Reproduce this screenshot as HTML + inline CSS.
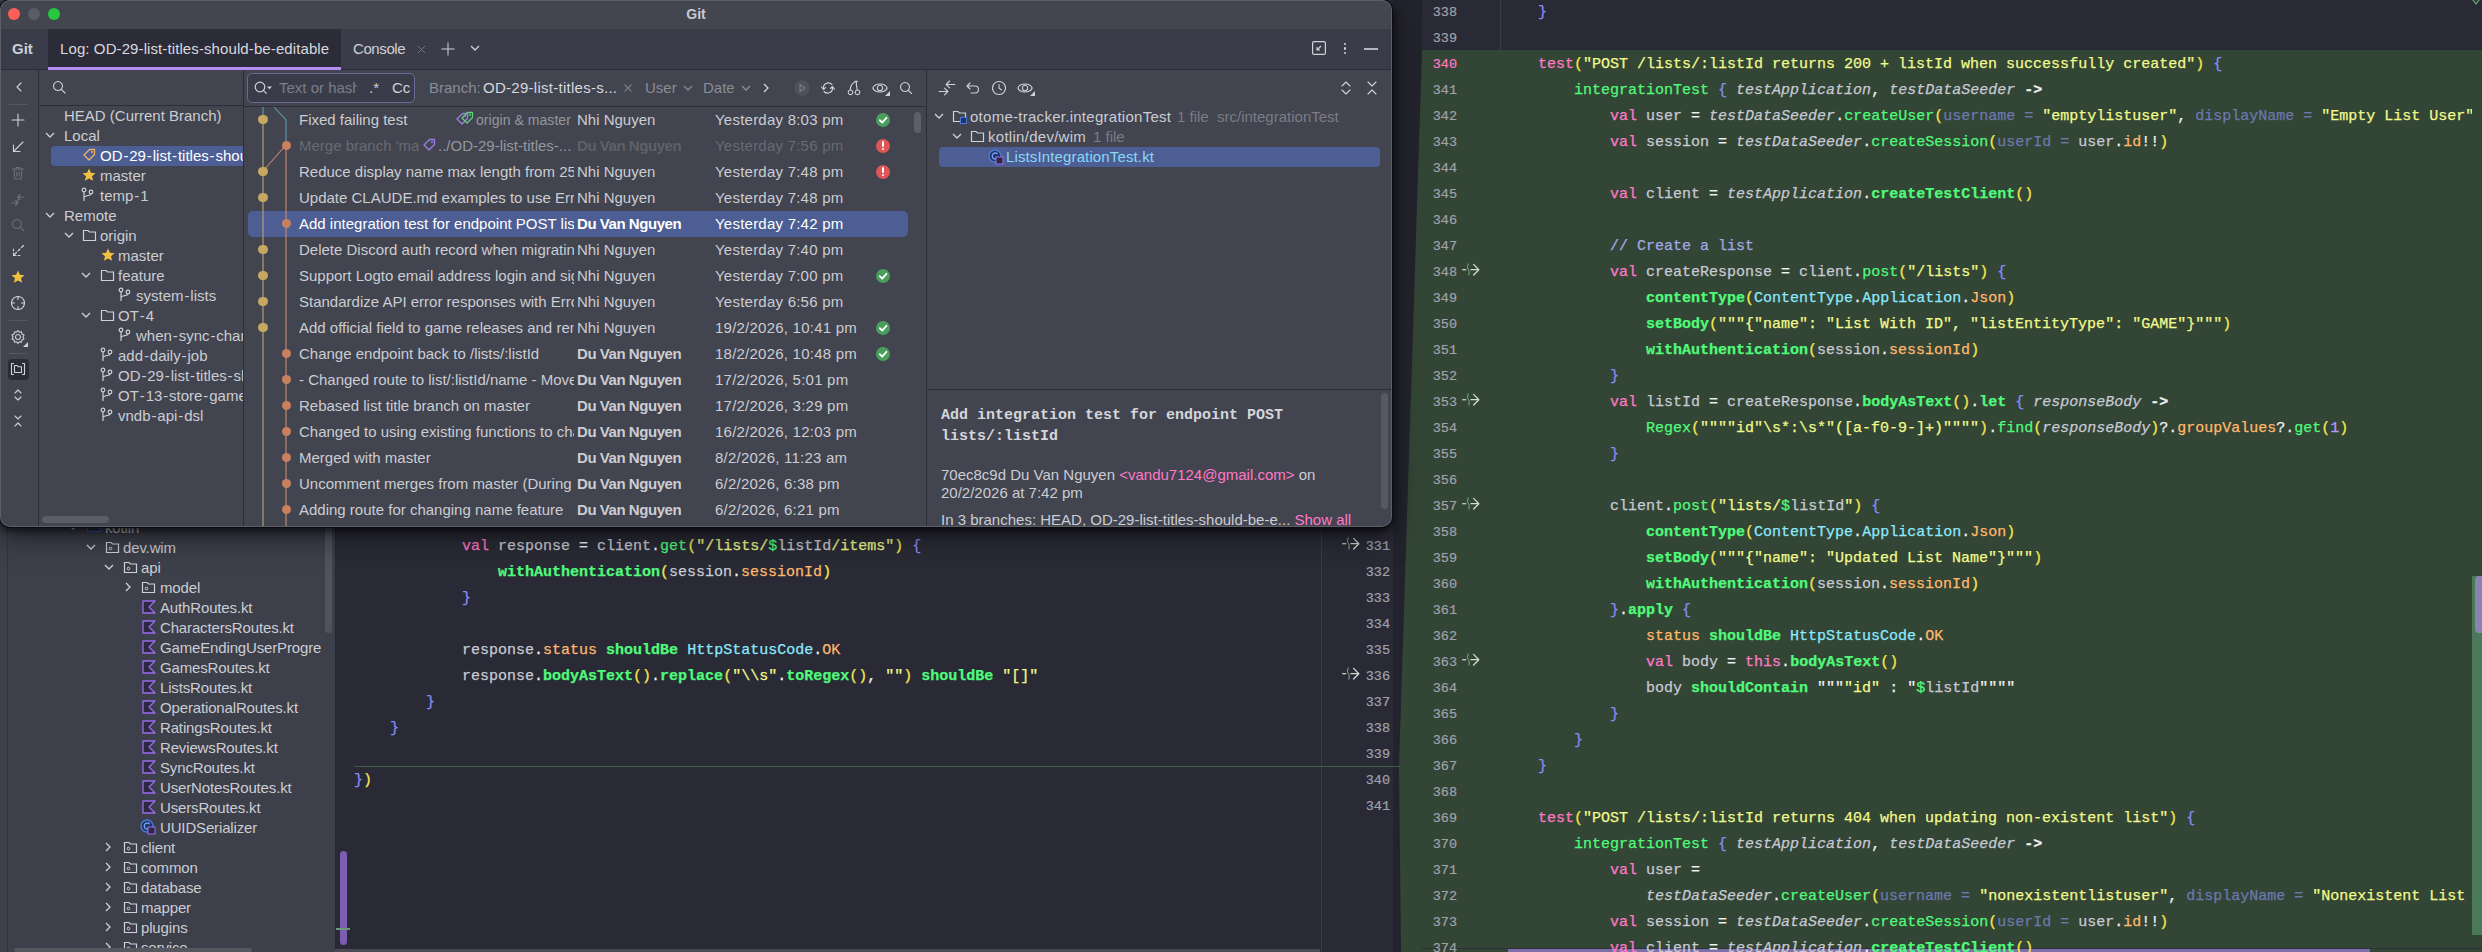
<!DOCTYPE html>
<html><head><meta charset="utf-8"><style>
html,body{margin:0;padding:0;width:2482px;height:952px;overflow:hidden;background:#292a35}
body{position:relative;font-family:"Liberation Sans",sans-serif}
</style></head><body>
<div style="position:absolute;left:0px;top:0px;width:2482px;height:952px;background:#292a35;"></div><div style="position:absolute;left:0px;top:0px;width:335px;height:952px;background:#3d3f4a;"></div><div style="position:absolute;left:7px;top:0px;width:1px;height:952px;background:#34363f;"></div><svg style="position:absolute;left:68px;top:524px;overflow:visible" width="10" height="6" viewBox="0 0 10 6" ><path d="M1 1 L5 5 L9 1" fill="none" stroke="#cfd1d8" stroke-width="1.3"/></svg><div style="position:absolute;left:87px;top:520px;width:14px;height:12px;background:#2a3450;border:1.5px solid #3a5fb0;box-sizing:border-box"></div><div style="position:absolute;left:105px;top:518px;font:400 15px/20px 'Liberation Sans',sans-serif;color:#cbcdd3;white-space:pre;letter-spacing:-0.15px">kotlin</div><svg style="position:absolute;left:86px;top:544px;overflow:visible" width="10" height="6" viewBox="0 0 10 6" ><path d="M1 1 L5 5 L9 1" fill="none" stroke="#cfd1d8" stroke-width="1.3"/></svg><svg style="position:absolute;left:105px;top:540px;overflow:visible" width="16" height="14" viewBox="0 0 16 14" ><path d="M1.5 2.5 h4.5 l1.5 1.5 h6 v8.5 h-12 z" fill="none" stroke="#cfd1d8" stroke-width="1.2"/><circle cx="5.5" cy="8.5" r="1.3" fill="none" stroke="#cfd1d8" stroke-width="1"/></svg><div style="position:absolute;left:123px;top:538px;font:400 15px/20px 'Liberation Sans',sans-serif;color:#cbcdd3;white-space:pre;letter-spacing:-0.15px">dev.wim</div><svg style="position:absolute;left:104px;top:564px;overflow:visible" width="10" height="6" viewBox="0 0 10 6" ><path d="M1 1 L5 5 L9 1" fill="none" stroke="#cfd1d8" stroke-width="1.3"/></svg><svg style="position:absolute;left:123px;top:560px;overflow:visible" width="16" height="14" viewBox="0 0 16 14" ><path d="M1.5 2.5 h4.5 l1.5 1.5 h6 v8.5 h-12 z" fill="none" stroke="#cfd1d8" stroke-width="1.2"/><circle cx="5.5" cy="8.5" r="1.3" fill="none" stroke="#cfd1d8" stroke-width="1"/></svg><div style="position:absolute;left:141px;top:558px;font:400 15px/20px 'Liberation Sans',sans-serif;color:#cbcdd3;white-space:pre;letter-spacing:-0.15px">api</div><svg style="position:absolute;left:125px;top:582px;overflow:visible" width="6" height="10" viewBox="0 0 6 10" ><path d="M1 1 L5 5 L1 9" fill="none" stroke="#cfd1d8" stroke-width="1.3"/></svg><svg style="position:absolute;left:141px;top:580px;overflow:visible" width="16" height="14" viewBox="0 0 16 14" ><path d="M1.5 2.5 h4.5 l1.5 1.5 h6 v8.5 h-12 z" fill="none" stroke="#cfd1d8" stroke-width="1.2"/><circle cx="5.5" cy="8.5" r="1.3" fill="none" stroke="#cfd1d8" stroke-width="1"/></svg><div style="position:absolute;left:160px;top:578px;font:400 15px/20px 'Liberation Sans',sans-serif;color:#cbcdd3;white-space:pre;letter-spacing:-0.15px">model</div><svg style="position:absolute;left:142px;top:600px;overflow:visible" width="14" height="14" viewBox="0 0 14 14" ><path d="M1 1 H13 L7 7 L13 13 H1 Z" fill="#2b2840" stroke="#9a6cf0" stroke-width="1.3" stroke-linejoin="round"/></svg><div style="position:absolute;left:160px;top:598px;font:400 15px/20px 'Liberation Sans',sans-serif;color:#cbcdd3;white-space:pre;letter-spacing:-0.15px">AuthRoutes.kt</div><svg style="position:absolute;left:142px;top:620px;overflow:visible" width="14" height="14" viewBox="0 0 14 14" ><path d="M1 1 H13 L7 7 L13 13 H1 Z" fill="#2b2840" stroke="#9a6cf0" stroke-width="1.3" stroke-linejoin="round"/></svg><div style="position:absolute;left:160px;top:618px;font:400 15px/20px 'Liberation Sans',sans-serif;color:#cbcdd3;white-space:pre;letter-spacing:-0.15px">CharactersRoutes.kt</div><svg style="position:absolute;left:142px;top:640px;overflow:visible" width="14" height="14" viewBox="0 0 14 14" ><path d="M1 1 H13 L7 7 L13 13 H1 Z" fill="#2b2840" stroke="#9a6cf0" stroke-width="1.3" stroke-linejoin="round"/></svg><div style="position:absolute;left:160px;top:638px;font:400 15px/20px 'Liberation Sans',sans-serif;color:#cbcdd3;white-space:pre;letter-spacing:-0.15px">GameEndingUserProgre</div><svg style="position:absolute;left:142px;top:660px;overflow:visible" width="14" height="14" viewBox="0 0 14 14" ><path d="M1 1 H13 L7 7 L13 13 H1 Z" fill="#2b2840" stroke="#9a6cf0" stroke-width="1.3" stroke-linejoin="round"/></svg><div style="position:absolute;left:160px;top:658px;font:400 15px/20px 'Liberation Sans',sans-serif;color:#cbcdd3;white-space:pre;letter-spacing:-0.15px">GamesRoutes.kt</div><svg style="position:absolute;left:142px;top:680px;overflow:visible" width="14" height="14" viewBox="0 0 14 14" ><path d="M1 1 H13 L7 7 L13 13 H1 Z" fill="#2b2840" stroke="#9a6cf0" stroke-width="1.3" stroke-linejoin="round"/></svg><div style="position:absolute;left:160px;top:678px;font:400 15px/20px 'Liberation Sans',sans-serif;color:#cbcdd3;white-space:pre;letter-spacing:-0.15px">ListsRoutes.kt</div><svg style="position:absolute;left:142px;top:700px;overflow:visible" width="14" height="14" viewBox="0 0 14 14" ><path d="M1 1 H13 L7 7 L13 13 H1 Z" fill="#2b2840" stroke="#9a6cf0" stroke-width="1.3" stroke-linejoin="round"/></svg><div style="position:absolute;left:160px;top:698px;font:400 15px/20px 'Liberation Sans',sans-serif;color:#cbcdd3;white-space:pre;letter-spacing:-0.15px">OperationalRoutes.kt</div><svg style="position:absolute;left:142px;top:720px;overflow:visible" width="14" height="14" viewBox="0 0 14 14" ><path d="M1 1 H13 L7 7 L13 13 H1 Z" fill="#2b2840" stroke="#9a6cf0" stroke-width="1.3" stroke-linejoin="round"/></svg><div style="position:absolute;left:160px;top:718px;font:400 15px/20px 'Liberation Sans',sans-serif;color:#cbcdd3;white-space:pre;letter-spacing:-0.15px">RatingsRoutes.kt</div><svg style="position:absolute;left:142px;top:740px;overflow:visible" width="14" height="14" viewBox="0 0 14 14" ><path d="M1 1 H13 L7 7 L13 13 H1 Z" fill="#2b2840" stroke="#9a6cf0" stroke-width="1.3" stroke-linejoin="round"/></svg><div style="position:absolute;left:160px;top:738px;font:400 15px/20px 'Liberation Sans',sans-serif;color:#cbcdd3;white-space:pre;letter-spacing:-0.15px">ReviewsRoutes.kt</div><svg style="position:absolute;left:142px;top:760px;overflow:visible" width="14" height="14" viewBox="0 0 14 14" ><path d="M1 1 H13 L7 7 L13 13 H1 Z" fill="#2b2840" stroke="#9a6cf0" stroke-width="1.3" stroke-linejoin="round"/></svg><div style="position:absolute;left:160px;top:758px;font:400 15px/20px 'Liberation Sans',sans-serif;color:#cbcdd3;white-space:pre;letter-spacing:-0.15px">SyncRoutes.kt</div><svg style="position:absolute;left:142px;top:780px;overflow:visible" width="14" height="14" viewBox="0 0 14 14" ><path d="M1 1 H13 L7 7 L13 13 H1 Z" fill="#2b2840" stroke="#9a6cf0" stroke-width="1.3" stroke-linejoin="round"/></svg><div style="position:absolute;left:160px;top:778px;font:400 15px/20px 'Liberation Sans',sans-serif;color:#cbcdd3;white-space:pre;letter-spacing:-0.15px">UserNotesRoutes.kt</div><svg style="position:absolute;left:142px;top:800px;overflow:visible" width="14" height="14" viewBox="0 0 14 14" ><path d="M1 1 H13 L7 7 L13 13 H1 Z" fill="#2b2840" stroke="#9a6cf0" stroke-width="1.3" stroke-linejoin="round"/></svg><div style="position:absolute;left:160px;top:798px;font:400 15px/20px 'Liberation Sans',sans-serif;color:#cbcdd3;white-space:pre;letter-spacing:-0.15px">UsersRoutes.kt</div><svg style="position:absolute;left:140px;top:819px;overflow:visible" width="16" height="16" viewBox="0 0 16 16" ><circle cx="7" cy="7" r="6" fill="#23345a" stroke="#4a7ae0" stroke-width="1.4"/><path d="M9.5 5 A3 3 0 1 0 9.5 9" fill="none" stroke="#6fa0ff" stroke-width="1.4"/><rect x="8" y="8" width="7" height="7" fill="#2b2840" stroke="#a070f0" stroke-width="1"/></svg><div style="position:absolute;left:160px;top:818px;font:400 15px/20px 'Liberation Sans',sans-serif;color:#cbcdd3;white-space:pre;letter-spacing:-0.15px">UUIDSerializer</div><svg style="position:absolute;left:105px;top:842px;overflow:visible" width="6" height="10" viewBox="0 0 6 10" ><path d="M1 1 L5 5 L1 9" fill="none" stroke="#cfd1d8" stroke-width="1.3"/></svg><svg style="position:absolute;left:123px;top:840px;overflow:visible" width="16" height="14" viewBox="0 0 16 14" ><path d="M1.5 2.5 h4.5 l1.5 1.5 h6 v8.5 h-12 z" fill="none" stroke="#cfd1d8" stroke-width="1.2"/><circle cx="5.5" cy="8.5" r="1.3" fill="none" stroke="#cfd1d8" stroke-width="1"/></svg><div style="position:absolute;left:141px;top:838px;font:400 15px/20px 'Liberation Sans',sans-serif;color:#cbcdd3;white-space:pre;letter-spacing:-0.15px">client</div><svg style="position:absolute;left:105px;top:862px;overflow:visible" width="6" height="10" viewBox="0 0 6 10" ><path d="M1 1 L5 5 L1 9" fill="none" stroke="#cfd1d8" stroke-width="1.3"/></svg><svg style="position:absolute;left:123px;top:860px;overflow:visible" width="16" height="14" viewBox="0 0 16 14" ><path d="M1.5 2.5 h4.5 l1.5 1.5 h6 v8.5 h-12 z" fill="none" stroke="#cfd1d8" stroke-width="1.2"/><circle cx="5.5" cy="8.5" r="1.3" fill="none" stroke="#cfd1d8" stroke-width="1"/></svg><div style="position:absolute;left:141px;top:858px;font:400 15px/20px 'Liberation Sans',sans-serif;color:#cbcdd3;white-space:pre;letter-spacing:-0.15px">common</div><svg style="position:absolute;left:105px;top:882px;overflow:visible" width="6" height="10" viewBox="0 0 6 10" ><path d="M1 1 L5 5 L1 9" fill="none" stroke="#cfd1d8" stroke-width="1.3"/></svg><svg style="position:absolute;left:123px;top:880px;overflow:visible" width="16" height="14" viewBox="0 0 16 14" ><path d="M1.5 2.5 h4.5 l1.5 1.5 h6 v8.5 h-12 z" fill="none" stroke="#cfd1d8" stroke-width="1.2"/><circle cx="5.5" cy="8.5" r="1.3" fill="none" stroke="#cfd1d8" stroke-width="1"/></svg><div style="position:absolute;left:141px;top:878px;font:400 15px/20px 'Liberation Sans',sans-serif;color:#cbcdd3;white-space:pre;letter-spacing:-0.15px">database</div><svg style="position:absolute;left:105px;top:902px;overflow:visible" width="6" height="10" viewBox="0 0 6 10" ><path d="M1 1 L5 5 L1 9" fill="none" stroke="#cfd1d8" stroke-width="1.3"/></svg><svg style="position:absolute;left:123px;top:900px;overflow:visible" width="16" height="14" viewBox="0 0 16 14" ><path d="M1.5 2.5 h4.5 l1.5 1.5 h6 v8.5 h-12 z" fill="none" stroke="#cfd1d8" stroke-width="1.2"/><circle cx="5.5" cy="8.5" r="1.3" fill="none" stroke="#cfd1d8" stroke-width="1"/></svg><div style="position:absolute;left:141px;top:898px;font:400 15px/20px 'Liberation Sans',sans-serif;color:#cbcdd3;white-space:pre;letter-spacing:-0.15px">mapper</div><svg style="position:absolute;left:105px;top:922px;overflow:visible" width="6" height="10" viewBox="0 0 6 10" ><path d="M1 1 L5 5 L1 9" fill="none" stroke="#cfd1d8" stroke-width="1.3"/></svg><svg style="position:absolute;left:123px;top:920px;overflow:visible" width="16" height="14" viewBox="0 0 16 14" ><path d="M1.5 2.5 h4.5 l1.5 1.5 h6 v8.5 h-12 z" fill="none" stroke="#cfd1d8" stroke-width="1.2"/><circle cx="5.5" cy="8.5" r="1.3" fill="none" stroke="#cfd1d8" stroke-width="1"/></svg><div style="position:absolute;left:141px;top:918px;font:400 15px/20px 'Liberation Sans',sans-serif;color:#cbcdd3;white-space:pre;letter-spacing:-0.15px">plugins</div><svg style="position:absolute;left:105px;top:942px;overflow:visible" width="6" height="10" viewBox="0 0 6 10" ><path d="M1 1 L5 5 L1 9" fill="none" stroke="#cfd1d8" stroke-width="1.3"/></svg><svg style="position:absolute;left:123px;top:940px;overflow:visible" width="16" height="14" viewBox="0 0 16 14" ><path d="M1.5 2.5 h4.5 l1.5 1.5 h6 v8.5 h-12 z" fill="none" stroke="#cfd1d8" stroke-width="1.2"/><circle cx="5.5" cy="8.5" r="1.3" fill="none" stroke="#cfd1d8" stroke-width="1"/></svg><div style="position:absolute;left:141px;top:938px;font:400 15px/20px 'Liberation Sans',sans-serif;color:#cbcdd3;white-space:pre;letter-spacing:-0.15px">service</div><div style="position:absolute;left:325px;top:527px;width:7px;height:106px;background:#50525c;border-radius:0 0 4px 4px"></div><div style="position:absolute;left:14px;top:948px;width:238px;height:4px;background:#55575f;border-radius:2px"></div><div style="position:absolute;left:335px;top:0px;width:1065px;height:952px;background:#292a35;"></div><div style="position:absolute;left:335px;top:0px;width:1px;height:952px;background:#25262f;"></div><div style="position:absolute;left:340px;top:851px;width:7px;height:94px;background:#7a5eb0;border-radius:4px"></div><div style="position:absolute;left:336px;top:928px;width:14px;height:2px;background:#6a9a78;"></div><div style="position:absolute;left:1321px;top:0px;width:1px;height:952px;background:#3a3b46;"></div><div style="position:absolute;left:335px;top:949px;width:985px;height:3px;background:#4a4b55;"></div><div style="position:absolute;left:1393px;top:0px;width:29px;height:952px;background:#22232c;"></div><svg style="position:absolute;left:1390px;top:0px;overflow:visible" width="1092" height="952" viewBox="0 0 1092 952" ><polygon points="9,766 32,50 1092,50 1092,952 11,952" fill="#334535"/></svg><div style="position:absolute;left:354px;top:766px;width:1046px;height:1px;background:#3f5f45;"></div><div style="position:absolute;left:1422px;top:0px;width:1060px;height:50px;background:#292a35;"></div><div style="position:absolute;left:1500px;top:0px;width:1px;height:50px;background:#3a3b46;"></div><div style="position:absolute;left:2472px;top:576px;width:10px;height:359px;background:#4a7858;"></div><svg style="position:absolute;left:2468px;top:-6px;overflow:visible" width="16" height="12" viewBox="0 0 16 12" ><path d="M2 2 L8 10 L14 2" fill="#24402c" stroke="#6f9f80" stroke-width="1.2"/></svg><div style="position:absolute;left:2475px;top:576px;width:9px;height:57px;background:#8785b0;border-radius:4px"></div><div style="position:absolute;left:1422px;top:948px;width:1060px;height:1px;background:#2e2f38;"></div><div style="position:absolute;left:1508px;top:949px;width:862px;height:3px;background:#7d70a8;"></div><div style="position:absolute;left:1502px;top:0;width:970px;height:952px;overflow:hidden"><div style="position:absolute;left:0px;top:0px;font:15px/26px 'Liberation Mono',monospace;white-space:pre;-webkit-text-stroke:0.25px"><span style="color:#c8cad4">    </span><span style="color:#8a8cf7">}</span></div><div style="position:absolute;left:0px;top:26px;font:15px/26px 'Liberation Mono',monospace;white-space:pre;-webkit-text-stroke:0.25px"></div><div style="position:absolute;left:0px;top:52px;font:15px/26px 'Liberation Mono',monospace;white-space:pre;-webkit-text-stroke:0.25px"><span style="color:#c8cad4">    </span><span style="color:#ff79c6">test</span><span style="color:#f4e84e">(</span><span style="color:#f1fa8c">"POST /lists/:listId returns 200 + listId when successfully created"</span><span style="color:#f4e84e">)</span><span style="color:#c8cad4"> </span><span style="color:#8a8cf7">{</span></div><div style="position:absolute;left:0px;top:78px;font:15px/26px 'Liberation Mono',monospace;white-space:pre;-webkit-text-stroke:0.25px"><span style="color:#c8cad4">        </span><span style="color:#50fa7b">integrationTest</span><span style="color:#c8cad4"> </span><span style="color:#8a8cf7">{</span><span style="color:#c8cad4"> </span><span style="color:#c8cad4;font-style:italic">testApplication</span><span style="color:#f2f2f2">, </span><span style="color:#c8cad4;font-style:italic">testDataSeeder</span><span style="color:#c8cad4"> </span><span style="color:#f2f2f2;font-weight:700">-&gt;</span></div><div style="position:absolute;left:0px;top:104px;font:15px/26px 'Liberation Mono',monospace;white-space:pre;-webkit-text-stroke:0.25px"><span style="color:#c8cad4">            </span><span style="color:#ff79c6">val</span><span style="color:#c8cad4"> user </span><span style="color:#f2f2f2">=</span><span style="color:#c8cad4"> </span><span style="color:#c8cad4;font-style:italic">testDataSeeder</span><span style="color:#f2f2f2">.</span><span style="color:#50fa7b">createUser</span><span style="color:#f4e84e">(</span><span style="color:#6c78ad">username = </span><span style="color:#f1fa8c">"emptylistuser"</span><span style="color:#f2f2f2">, </span><span style="color:#6c78ad">displayName = </span><span style="color:#f1fa8c">"Empty List User"</span><span style="color:#f4e84e">)</span></div><div style="position:absolute;left:0px;top:130px;font:15px/26px 'Liberation Mono',monospace;white-space:pre;-webkit-text-stroke:0.25px"><span style="color:#c8cad4">            </span><span style="color:#ff79c6">val</span><span style="color:#c8cad4"> session </span><span style="color:#f2f2f2">=</span><span style="color:#c8cad4"> </span><span style="color:#c8cad4;font-style:italic">testDataSeeder</span><span style="color:#f2f2f2">.</span><span style="color:#50fa7b">createSession</span><span style="color:#f4e84e">(</span><span style="color:#6c78ad">userId = </span><span style="color:#c8cad4">user</span><span style="color:#f2f2f2">.</span><span style="color:#ffb86c">id</span><span style="color:#f2f2f2">!!</span><span style="color:#f4e84e">)</span></div><div style="position:absolute;left:0px;top:156px;font:15px/26px 'Liberation Mono',monospace;white-space:pre;-webkit-text-stroke:0.25px"></div><div style="position:absolute;left:0px;top:182px;font:15px/26px 'Liberation Mono',monospace;white-space:pre;-webkit-text-stroke:0.25px"><span style="color:#c8cad4">            </span><span style="color:#ff79c6">val</span><span style="color:#c8cad4"> client </span><span style="color:#f2f2f2">=</span><span style="color:#c8cad4"> </span><span style="color:#c8cad4;font-style:italic">testApplication</span><span style="color:#f2f2f2">.</span><span style="color:#50fa7b;font-weight:700">createTestClient</span><span style="color:#f4e84e">()</span></div><div style="position:absolute;left:0px;top:208px;font:15px/26px 'Liberation Mono',monospace;white-space:pre;-webkit-text-stroke:0.25px"></div><div style="position:absolute;left:0px;top:234px;font:15px/26px 'Liberation Mono',monospace;white-space:pre;-webkit-text-stroke:0.25px"><span style="color:#c8cad4">            </span><span style="color:#a2a9e6">// Create a list</span></div><div style="position:absolute;left:0px;top:260px;font:15px/26px 'Liberation Mono',monospace;white-space:pre;-webkit-text-stroke:0.25px"><span style="color:#c8cad4">            </span><span style="color:#ff79c6">val</span><span style="color:#c8cad4"> createResponse </span><span style="color:#f2f2f2">=</span><span style="color:#c8cad4"> client</span><span style="color:#f2f2f2">.</span><span style="color:#50fa7b">post</span><span style="color:#f4e84e">(</span><span style="color:#f1fa8c">"/lists"</span><span style="color:#f4e84e">)</span><span style="color:#c8cad4"> </span><span style="color:#8a8cf7">{</span></div><div style="position:absolute;left:0px;top:286px;font:15px/26px 'Liberation Mono',monospace;white-space:pre;-webkit-text-stroke:0.25px"><span style="color:#c8cad4">                </span><span style="color:#50fa7b;font-weight:700">contentType</span><span style="color:#f4e84e">(</span><span style="color:#8be9fd">ContentType</span><span style="color:#f2f2f2">.</span><span style="color:#8be9fd">Application</span><span style="color:#f2f2f2">.</span><span style="color:#ffb86c">Json</span><span style="color:#f4e84e">)</span></div><div style="position:absolute;left:0px;top:312px;font:15px/26px 'Liberation Mono',monospace;white-space:pre;-webkit-text-stroke:0.25px"><span style="color:#c8cad4">                </span><span style="color:#50fa7b;font-weight:700">setBody</span><span style="color:#f4e84e">(</span><span style="color:#f1fa8c">"""{"name": "List With ID", "listEntityType": "GAME"}"""</span><span style="color:#f4e84e">)</span></div><div style="position:absolute;left:0px;top:338px;font:15px/26px 'Liberation Mono',monospace;white-space:pre;-webkit-text-stroke:0.25px"><span style="color:#c8cad4">                </span><span style="color:#50fa7b;font-weight:700">withAuthentication</span><span style="color:#f4e84e">(</span><span style="color:#c8cad4">session</span><span style="color:#f2f2f2">.</span><span style="color:#ffb86c">sessionId</span><span style="color:#f4e84e">)</span></div><div style="position:absolute;left:0px;top:364px;font:15px/26px 'Liberation Mono',monospace;white-space:pre;-webkit-text-stroke:0.25px"><span style="color:#c8cad4">            </span><span style="color:#8a8cf7">}</span></div><div style="position:absolute;left:0px;top:390px;font:15px/26px 'Liberation Mono',monospace;white-space:pre;-webkit-text-stroke:0.25px"><span style="color:#c8cad4">            </span><span style="color:#ff79c6">val</span><span style="color:#c8cad4"> listId </span><span style="color:#f2f2f2">=</span><span style="color:#c8cad4"> createResponse</span><span style="color:#f2f2f2">.</span><span style="color:#50fa7b;font-weight:700">bodyAsText</span><span style="color:#f4e84e">()</span><span style="color:#f2f2f2">.</span><span style="color:#50fa7b;font-weight:700">let</span><span style="color:#c8cad4"> </span><span style="color:#8a8cf7">{</span><span style="color:#c8cad4"> </span><span style="color:#c8cad4;font-style:italic">responseBody</span><span style="color:#c8cad4"> </span><span style="color:#f2f2f2;font-weight:700">-&gt;</span></div><div style="position:absolute;left:0px;top:416px;font:15px/26px 'Liberation Mono',monospace;white-space:pre;-webkit-text-stroke:0.25px"><span style="color:#c8cad4">                </span><span style="color:#50fa7b">Regex</span><span style="color:#f4e84e">(</span><span style="color:#f1fa8c">""""id"\s*:\s*"([a-f0-9-]+)""""</span><span style="color:#f4e84e">)</span><span style="color:#f2f2f2">.</span><span style="color:#50fa7b">find</span><span style="color:#f4e84e">(</span><span style="color:#c8cad4;font-style:italic">responseBody</span><span style="color:#f4e84e">)</span><span style="color:#f2f2f2">?.</span><span style="color:#ffb86c">groupValues</span><span style="color:#f2f2f2">?.</span><span style="color:#50fa7b">get</span><span style="color:#f4e84e">(</span><span style="color:#bd93f9">1</span><span style="color:#f4e84e">)</span></div><div style="position:absolute;left:0px;top:442px;font:15px/26px 'Liberation Mono',monospace;white-space:pre;-webkit-text-stroke:0.25px"><span style="color:#c8cad4">            </span><span style="color:#8a8cf7">}</span></div><div style="position:absolute;left:0px;top:468px;font:15px/26px 'Liberation Mono',monospace;white-space:pre;-webkit-text-stroke:0.25px"></div><div style="position:absolute;left:0px;top:494px;font:15px/26px 'Liberation Mono',monospace;white-space:pre;-webkit-text-stroke:0.25px"><span style="color:#c8cad4">            </span><span style="color:#c8cad4">client</span><span style="color:#f2f2f2">.</span><span style="color:#50fa7b">post</span><span style="color:#f4e84e">(</span><span style="color:#f1fa8c">"lists/</span><span style="color:#50fa7b">$</span><span style="color:#c8cad4">listId</span><span style="color:#f1fa8c">"</span><span style="color:#f4e84e">)</span><span style="color:#c8cad4"> </span><span style="color:#8a8cf7">{</span></div><div style="position:absolute;left:0px;top:520px;font:15px/26px 'Liberation Mono',monospace;white-space:pre;-webkit-text-stroke:0.25px"><span style="color:#c8cad4">                </span><span style="color:#50fa7b;font-weight:700">contentType</span><span style="color:#f4e84e">(</span><span style="color:#8be9fd">ContentType</span><span style="color:#f2f2f2">.</span><span style="color:#8be9fd">Application</span><span style="color:#f2f2f2">.</span><span style="color:#ffb86c">Json</span><span style="color:#f4e84e">)</span></div><div style="position:absolute;left:0px;top:546px;font:15px/26px 'Liberation Mono',monospace;white-space:pre;-webkit-text-stroke:0.25px"><span style="color:#c8cad4">                </span><span style="color:#50fa7b;font-weight:700">setBody</span><span style="color:#f4e84e">(</span><span style="color:#f1fa8c">"""{"name": "Updated List Name"}"""</span><span style="color:#f4e84e">)</span></div><div style="position:absolute;left:0px;top:572px;font:15px/26px 'Liberation Mono',monospace;white-space:pre;-webkit-text-stroke:0.25px"><span style="color:#c8cad4">                </span><span style="color:#50fa7b;font-weight:700">withAuthentication</span><span style="color:#f4e84e">(</span><span style="color:#c8cad4">session</span><span style="color:#f2f2f2">.</span><span style="color:#ffb86c">sessionId</span><span style="color:#f4e84e">)</span></div><div style="position:absolute;left:0px;top:598px;font:15px/26px 'Liberation Mono',monospace;white-space:pre;-webkit-text-stroke:0.25px"><span style="color:#c8cad4">            </span><span style="color:#8a8cf7">}</span><span style="color:#f2f2f2">.</span><span style="color:#50fa7b;font-weight:700">apply</span><span style="color:#c8cad4"> </span><span style="color:#8a8cf7">{</span></div><div style="position:absolute;left:0px;top:624px;font:15px/26px 'Liberation Mono',monospace;white-space:pre;-webkit-text-stroke:0.25px"><span style="color:#c8cad4">                </span><span style="color:#ffb86c">status</span><span style="color:#c8cad4"> </span><span style="color:#50fa7b;font-weight:700">shouldBe</span><span style="color:#c8cad4"> </span><span style="color:#8be9fd">HttpStatusCode</span><span style="color:#f2f2f2">.</span><span style="color:#ffb86c">OK</span></div><div style="position:absolute;left:0px;top:650px;font:15px/26px 'Liberation Mono',monospace;white-space:pre;-webkit-text-stroke:0.25px"><span style="color:#c8cad4">                </span><span style="color:#ff79c6">val</span><span style="color:#c8cad4"> body </span><span style="color:#f2f2f2">=</span><span style="color:#c8cad4"> </span><span style="color:#ff79c6">this</span><span style="color:#f2f2f2">.</span><span style="color:#50fa7b;font-weight:700">bodyAsText</span><span style="color:#f4e84e">()</span></div><div style="position:absolute;left:0px;top:676px;font:15px/26px 'Liberation Mono',monospace;white-space:pre;-webkit-text-stroke:0.25px"><span style="color:#c8cad4">                </span><span style="color:#c8cad4">body </span><span style="color:#50fa7b;font-weight:700">shouldContain</span><span style="color:#c8cad4"> </span><span style="color:#f2f2f2">"""</span><span style="color:#f1fa8c">"id"</span><span style="color:#f2f2f2"> : "</span><span style="color:#50fa7b">$</span><span style="color:#c8cad4">listId</span><span style="color:#f2f2f2">""""</span></div><div style="position:absolute;left:0px;top:702px;font:15px/26px 'Liberation Mono',monospace;white-space:pre;-webkit-text-stroke:0.25px"><span style="color:#c8cad4">            </span><span style="color:#8a8cf7">}</span></div><div style="position:absolute;left:0px;top:728px;font:15px/26px 'Liberation Mono',monospace;white-space:pre;-webkit-text-stroke:0.25px"><span style="color:#c8cad4">        </span><span style="color:#8a8cf7">}</span></div><div style="position:absolute;left:0px;top:754px;font:15px/26px 'Liberation Mono',monospace;white-space:pre;-webkit-text-stroke:0.25px"><span style="color:#c8cad4">    </span><span style="color:#8a8cf7">}</span></div><div style="position:absolute;left:0px;top:780px;font:15px/26px 'Liberation Mono',monospace;white-space:pre;-webkit-text-stroke:0.25px"></div><div style="position:absolute;left:0px;top:806px;font:15px/26px 'Liberation Mono',monospace;white-space:pre;-webkit-text-stroke:0.25px"><span style="color:#c8cad4">    </span><span style="color:#ff79c6">test</span><span style="color:#f4e84e">(</span><span style="color:#f1fa8c">"POST /lists/:listId returns 404 when updating non-existent list"</span><span style="color:#f4e84e">)</span><span style="color:#c8cad4"> </span><span style="color:#8a8cf7">{</span></div><div style="position:absolute;left:0px;top:832px;font:15px/26px 'Liberation Mono',monospace;white-space:pre;-webkit-text-stroke:0.25px"><span style="color:#c8cad4">        </span><span style="color:#50fa7b">integrationTest</span><span style="color:#c8cad4"> </span><span style="color:#8a8cf7">{</span><span style="color:#c8cad4"> </span><span style="color:#c8cad4;font-style:italic">testApplication</span><span style="color:#f2f2f2">, </span><span style="color:#c8cad4;font-style:italic">testDataSeeder</span><span style="color:#c8cad4"> </span><span style="color:#f2f2f2;font-weight:700">-&gt;</span></div><div style="position:absolute;left:0px;top:858px;font:15px/26px 'Liberation Mono',monospace;white-space:pre;-webkit-text-stroke:0.25px"><span style="color:#c8cad4">            </span><span style="color:#ff79c6">val</span><span style="color:#c8cad4"> user </span><span style="color:#f2f2f2">=</span></div><div style="position:absolute;left:0px;top:884px;font:15px/26px 'Liberation Mono',monospace;white-space:pre;-webkit-text-stroke:0.25px"><span style="color:#c8cad4">                </span><span style="color:#c8cad4;font-style:italic">testDataSeeder</span><span style="color:#f2f2f2">.</span><span style="color:#50fa7b">createUser</span><span style="color:#f4e84e">(</span><span style="color:#6c78ad">username = </span><span style="color:#f1fa8c">"nonexistentlistuser"</span><span style="color:#f2f2f2">, </span><span style="color:#6c78ad">displayName = </span><span style="color:#f1fa8c">"Nonexistent List User"</span><span style="color:#f4e84e">)</span></div><div style="position:absolute;left:0px;top:910px;font:15px/26px 'Liberation Mono',monospace;white-space:pre;-webkit-text-stroke:0.25px"><span style="color:#c8cad4">            </span><span style="color:#ff79c6">val</span><span style="color:#c8cad4"> session </span><span style="color:#f2f2f2">=</span><span style="color:#c8cad4"> </span><span style="color:#c8cad4;font-style:italic">testDataSeeder</span><span style="color:#f2f2f2">.</span><span style="color:#50fa7b">createSession</span><span style="color:#f4e84e">(</span><span style="color:#6c78ad">userId = </span><span style="color:#c8cad4">user</span><span style="color:#f2f2f2">.</span><span style="color:#ffb86c">id</span><span style="color:#f2f2f2">!!</span><span style="color:#f4e84e">)</span></div><div style="position:absolute;left:0px;top:936px;font:15px/26px 'Liberation Mono',monospace;white-space:pre;-webkit-text-stroke:0.25px"><span style="color:#c8cad4">            </span><span style="color:#ff79c6">val</span><span style="color:#c8cad4"> client </span><span style="color:#f2f2f2">=</span><span style="color:#c8cad4"> </span><span style="color:#c8cad4;font-style:italic">testApplication</span><span style="color:#f2f2f2">.</span><span style="color:#50fa7b;font-weight:700">createTestClient</span><span style="color:#f4e84e">()</span></div></div><div style="position:absolute;left:1412px;top:0px;width:45px;text-align:right;font:13.5px/26px 'Liberation Mono',monospace;color:#a0a2ac;-webkit-text-stroke:0.2px">338</div><div style="position:absolute;left:1412px;top:26px;width:45px;text-align:right;font:13.5px/26px 'Liberation Mono',monospace;color:#a0a2ac;-webkit-text-stroke:0.2px">339</div><div style="position:absolute;left:1412px;top:52px;width:45px;text-align:right;font:13.5px/26px 'Liberation Mono',monospace;color:#ff79c6;-webkit-text-stroke:0.2px">340</div><div style="position:absolute;left:1412px;top:78px;width:45px;text-align:right;font:13.5px/26px 'Liberation Mono',monospace;color:#a0a2ac;-webkit-text-stroke:0.2px">341</div><div style="position:absolute;left:1412px;top:104px;width:45px;text-align:right;font:13.5px/26px 'Liberation Mono',monospace;color:#a0a2ac;-webkit-text-stroke:0.2px">342</div><div style="position:absolute;left:1412px;top:130px;width:45px;text-align:right;font:13.5px/26px 'Liberation Mono',monospace;color:#a0a2ac;-webkit-text-stroke:0.2px">343</div><div style="position:absolute;left:1412px;top:156px;width:45px;text-align:right;font:13.5px/26px 'Liberation Mono',monospace;color:#a0a2ac;-webkit-text-stroke:0.2px">344</div><div style="position:absolute;left:1412px;top:182px;width:45px;text-align:right;font:13.5px/26px 'Liberation Mono',monospace;color:#a0a2ac;-webkit-text-stroke:0.2px">345</div><div style="position:absolute;left:1412px;top:208px;width:45px;text-align:right;font:13.5px/26px 'Liberation Mono',monospace;color:#a0a2ac;-webkit-text-stroke:0.2px">346</div><div style="position:absolute;left:1412px;top:234px;width:45px;text-align:right;font:13.5px/26px 'Liberation Mono',monospace;color:#a0a2ac;-webkit-text-stroke:0.2px">347</div><div style="position:absolute;left:1412px;top:260px;width:45px;text-align:right;font:13.5px/26px 'Liberation Mono',monospace;color:#a0a2ac;-webkit-text-stroke:0.2px">348</div><div style="position:absolute;left:1412px;top:286px;width:45px;text-align:right;font:13.5px/26px 'Liberation Mono',monospace;color:#a0a2ac;-webkit-text-stroke:0.2px">349</div><div style="position:absolute;left:1412px;top:312px;width:45px;text-align:right;font:13.5px/26px 'Liberation Mono',monospace;color:#a0a2ac;-webkit-text-stroke:0.2px">350</div><div style="position:absolute;left:1412px;top:338px;width:45px;text-align:right;font:13.5px/26px 'Liberation Mono',monospace;color:#a0a2ac;-webkit-text-stroke:0.2px">351</div><div style="position:absolute;left:1412px;top:364px;width:45px;text-align:right;font:13.5px/26px 'Liberation Mono',monospace;color:#a0a2ac;-webkit-text-stroke:0.2px">352</div><div style="position:absolute;left:1412px;top:390px;width:45px;text-align:right;font:13.5px/26px 'Liberation Mono',monospace;color:#a0a2ac;-webkit-text-stroke:0.2px">353</div><div style="position:absolute;left:1412px;top:416px;width:45px;text-align:right;font:13.5px/26px 'Liberation Mono',monospace;color:#a0a2ac;-webkit-text-stroke:0.2px">354</div><div style="position:absolute;left:1412px;top:442px;width:45px;text-align:right;font:13.5px/26px 'Liberation Mono',monospace;color:#a0a2ac;-webkit-text-stroke:0.2px">355</div><div style="position:absolute;left:1412px;top:468px;width:45px;text-align:right;font:13.5px/26px 'Liberation Mono',monospace;color:#a0a2ac;-webkit-text-stroke:0.2px">356</div><div style="position:absolute;left:1412px;top:494px;width:45px;text-align:right;font:13.5px/26px 'Liberation Mono',monospace;color:#a0a2ac;-webkit-text-stroke:0.2px">357</div><div style="position:absolute;left:1412px;top:520px;width:45px;text-align:right;font:13.5px/26px 'Liberation Mono',monospace;color:#a0a2ac;-webkit-text-stroke:0.2px">358</div><div style="position:absolute;left:1412px;top:546px;width:45px;text-align:right;font:13.5px/26px 'Liberation Mono',monospace;color:#a0a2ac;-webkit-text-stroke:0.2px">359</div><div style="position:absolute;left:1412px;top:572px;width:45px;text-align:right;font:13.5px/26px 'Liberation Mono',monospace;color:#a0a2ac;-webkit-text-stroke:0.2px">360</div><div style="position:absolute;left:1412px;top:598px;width:45px;text-align:right;font:13.5px/26px 'Liberation Mono',monospace;color:#a0a2ac;-webkit-text-stroke:0.2px">361</div><div style="position:absolute;left:1412px;top:624px;width:45px;text-align:right;font:13.5px/26px 'Liberation Mono',monospace;color:#a0a2ac;-webkit-text-stroke:0.2px">362</div><div style="position:absolute;left:1412px;top:650px;width:45px;text-align:right;font:13.5px/26px 'Liberation Mono',monospace;color:#a0a2ac;-webkit-text-stroke:0.2px">363</div><div style="position:absolute;left:1412px;top:676px;width:45px;text-align:right;font:13.5px/26px 'Liberation Mono',monospace;color:#a0a2ac;-webkit-text-stroke:0.2px">364</div><div style="position:absolute;left:1412px;top:702px;width:45px;text-align:right;font:13.5px/26px 'Liberation Mono',monospace;color:#a0a2ac;-webkit-text-stroke:0.2px">365</div><div style="position:absolute;left:1412px;top:728px;width:45px;text-align:right;font:13.5px/26px 'Liberation Mono',monospace;color:#a0a2ac;-webkit-text-stroke:0.2px">366</div><div style="position:absolute;left:1412px;top:754px;width:45px;text-align:right;font:13.5px/26px 'Liberation Mono',monospace;color:#a0a2ac;-webkit-text-stroke:0.2px">367</div><div style="position:absolute;left:1412px;top:780px;width:45px;text-align:right;font:13.5px/26px 'Liberation Mono',monospace;color:#a0a2ac;-webkit-text-stroke:0.2px">368</div><div style="position:absolute;left:1412px;top:806px;width:45px;text-align:right;font:13.5px/26px 'Liberation Mono',monospace;color:#a0a2ac;-webkit-text-stroke:0.2px">369</div><div style="position:absolute;left:1412px;top:832px;width:45px;text-align:right;font:13.5px/26px 'Liberation Mono',monospace;color:#a0a2ac;-webkit-text-stroke:0.2px">370</div><div style="position:absolute;left:1412px;top:858px;width:45px;text-align:right;font:13.5px/26px 'Liberation Mono',monospace;color:#a0a2ac;-webkit-text-stroke:0.2px">371</div><div style="position:absolute;left:1412px;top:884px;width:45px;text-align:right;font:13.5px/26px 'Liberation Mono',monospace;color:#a0a2ac;-webkit-text-stroke:0.2px">372</div><div style="position:absolute;left:1412px;top:910px;width:45px;text-align:right;font:13.5px/26px 'Liberation Mono',monospace;color:#a0a2ac;-webkit-text-stroke:0.2px">373</div><div style="position:absolute;left:1412px;top:936px;width:45px;text-align:right;font:13.5px/26px 'Liberation Mono',monospace;color:#a0a2ac;-webkit-text-stroke:0.2px">374</div><svg style="position:absolute;left:1462px;top:264px;overflow:visible" width="18" height="14" viewBox="0 0 18 14" ><path d="M0.2 5.7 H4.2" stroke="#c8d0c8" stroke-width="1.3"/><path d="M6.5 -0.6 C5 2 5 3.5 6.3 5.5 C7.8 7.5 7.8 9 6.7 11.5" fill="none" stroke="#6a9a72" stroke-width="1.1"/><path d="M9 5.7 H16.5 M11.6 0.4 L16.8 5.7 L11.6 11" fill="none" stroke="#d2dad2" stroke-width="1.3" stroke-linecap="round" stroke-linejoin="round"/></svg><svg style="position:absolute;left:1462px;top:394px;overflow:visible" width="18" height="14" viewBox="0 0 18 14" ><path d="M0.2 5.7 H4.2" stroke="#c8d0c8" stroke-width="1.3"/><path d="M6.5 -0.6 C5 2 5 3.5 6.3 5.5 C7.8 7.5 7.8 9 6.7 11.5" fill="none" stroke="#6a9a72" stroke-width="1.1"/><path d="M9 5.7 H16.5 M11.6 0.4 L16.8 5.7 L11.6 11" fill="none" stroke="#d2dad2" stroke-width="1.3" stroke-linecap="round" stroke-linejoin="round"/></svg><svg style="position:absolute;left:1462px;top:498px;overflow:visible" width="18" height="14" viewBox="0 0 18 14" ><path d="M0.2 5.7 H4.2" stroke="#c8d0c8" stroke-width="1.3"/><path d="M6.5 -0.6 C5 2 5 3.5 6.3 5.5 C7.8 7.5 7.8 9 6.7 11.5" fill="none" stroke="#6a9a72" stroke-width="1.1"/><path d="M9 5.7 H16.5 M11.6 0.4 L16.8 5.7 L11.6 11" fill="none" stroke="#d2dad2" stroke-width="1.3" stroke-linecap="round" stroke-linejoin="round"/></svg><svg style="position:absolute;left:1462px;top:654px;overflow:visible" width="18" height="14" viewBox="0 0 18 14" ><path d="M0.2 5.7 H4.2" stroke="#c8d0c8" stroke-width="1.3"/><path d="M6.5 -0.6 C5 2 5 3.5 6.3 5.5 C7.8 7.5 7.8 9 6.7 11.5" fill="none" stroke="#6a9a72" stroke-width="1.1"/><path d="M9 5.7 H16.5 M11.6 0.4 L16.8 5.7 L11.6 11" fill="none" stroke="#d2dad2" stroke-width="1.3" stroke-linecap="round" stroke-linejoin="round"/></svg><div style="position:absolute;left:354px;top:0;width:966px;height:952px;overflow:hidden"><div style="position:absolute;left:0px;top:534px;font:15px/26px 'Liberation Mono',monospace;white-space:pre;-webkit-text-stroke:0.25px"><span style="color:#c8cad4">            </span><span style="color:#ff79c6">val</span><span style="color:#c8cad4"> response </span><span style="color:#f2f2f2">=</span><span style="color:#c8cad4"> client</span><span style="color:#f2f2f2">.</span><span style="color:#50fa7b">get</span><span style="color:#f4e84e">(</span><span style="color:#f1fa8c">"/lists/</span><span style="color:#50fa7b">$</span><span style="color:#c8cad4">listId</span><span style="color:#f1fa8c">/items"</span><span style="color:#f4e84e">)</span><span style="color:#c8cad4"> </span><span style="color:#8a8cf7">{</span></div><div style="position:absolute;left:0px;top:560px;font:15px/26px 'Liberation Mono',monospace;white-space:pre;-webkit-text-stroke:0.25px"><span style="color:#c8cad4">                </span><span style="color:#50fa7b;font-weight:700">withAuthentication</span><span style="color:#f4e84e">(</span><span style="color:#c8cad4">session</span><span style="color:#f2f2f2">.</span><span style="color:#ffb86c">sessionId</span><span style="color:#f4e84e">)</span></div><div style="position:absolute;left:0px;top:586px;font:15px/26px 'Liberation Mono',monospace;white-space:pre;-webkit-text-stroke:0.25px"><span style="color:#c8cad4">            </span><span style="color:#8a8cf7">}</span></div><div style="position:absolute;left:0px;top:612px;font:15px/26px 'Liberation Mono',monospace;white-space:pre;-webkit-text-stroke:0.25px"></div><div style="position:absolute;left:0px;top:638px;font:15px/26px 'Liberation Mono',monospace;white-space:pre;-webkit-text-stroke:0.25px"><span style="color:#c8cad4">            </span><span style="color:#c8cad4">response</span><span style="color:#f2f2f2">.</span><span style="color:#ffb86c">status</span><span style="color:#c8cad4"> </span><span style="color:#50fa7b;font-weight:700">shouldBe</span><span style="color:#c8cad4"> </span><span style="color:#8be9fd">HttpStatusCode</span><span style="color:#f2f2f2">.</span><span style="color:#ffb86c">OK</span></div><div style="position:absolute;left:0px;top:664px;font:15px/26px 'Liberation Mono',monospace;white-space:pre;-webkit-text-stroke:0.25px"><span style="color:#c8cad4">            </span><span style="color:#c8cad4">response</span><span style="color:#f2f2f2">.</span><span style="color:#50fa7b;font-weight:700">bodyAsText</span><span style="color:#f4e84e">()</span><span style="color:#f2f2f2">.</span><span style="color:#50fa7b;font-weight:700">replace</span><span style="color:#f4e84e">(</span><span style="color:#f1fa8c">"\\s"</span><span style="color:#f2f2f2">.</span><span style="color:#50fa7b;font-weight:700">toRegex</span><span style="color:#f4e84e">()</span><span style="color:#f2f2f2">, </span><span style="color:#f1fa8c">""</span><span style="color:#f4e84e">)</span><span style="color:#c8cad4"> </span><span style="color:#50fa7b;font-weight:700">shouldBe</span><span style="color:#c8cad4"> </span><span style="color:#f1fa8c">"[]"</span></div><div style="position:absolute;left:0px;top:690px;font:15px/26px 'Liberation Mono',monospace;white-space:pre;-webkit-text-stroke:0.25px"><span style="color:#c8cad4">        </span><span style="color:#8a8cf7">}</span></div><div style="position:absolute;left:0px;top:716px;font:15px/26px 'Liberation Mono',monospace;white-space:pre;-webkit-text-stroke:0.25px"><span style="color:#c8cad4">    </span><span style="color:#8a8cf7">}</span></div><div style="position:absolute;left:0px;top:742px;font:15px/26px 'Liberation Mono',monospace;white-space:pre;-webkit-text-stroke:0.25px"></div><div style="position:absolute;left:0px;top:768px;font:15px/26px 'Liberation Mono',monospace;white-space:pre;-webkit-text-stroke:0.25px"><span style="color:#8a8cf7">}</span><span style="color:#f4e84e">)</span></div><div style="position:absolute;left:0px;top:794px;font:15px/26px 'Liberation Mono',monospace;white-space:pre;-webkit-text-stroke:0.25px"></div></div><div style="position:absolute;left:1345px;top:534px;width:45px;text-align:right;font:13.5px/26px 'Liberation Mono',monospace;color:#a0a2ac;-webkit-text-stroke:0.2px">331</div><div style="position:absolute;left:1345px;top:560px;width:45px;text-align:right;font:13.5px/26px 'Liberation Mono',monospace;color:#a0a2ac;-webkit-text-stroke:0.2px">332</div><div style="position:absolute;left:1345px;top:586px;width:45px;text-align:right;font:13.5px/26px 'Liberation Mono',monospace;color:#a0a2ac;-webkit-text-stroke:0.2px">333</div><div style="position:absolute;left:1345px;top:612px;width:45px;text-align:right;font:13.5px/26px 'Liberation Mono',monospace;color:#a0a2ac;-webkit-text-stroke:0.2px">334</div><div style="position:absolute;left:1345px;top:638px;width:45px;text-align:right;font:13.5px/26px 'Liberation Mono',monospace;color:#a0a2ac;-webkit-text-stroke:0.2px">335</div><div style="position:absolute;left:1345px;top:664px;width:45px;text-align:right;font:13.5px/26px 'Liberation Mono',monospace;color:#a0a2ac;-webkit-text-stroke:0.2px">336</div><div style="position:absolute;left:1345px;top:690px;width:45px;text-align:right;font:13.5px/26px 'Liberation Mono',monospace;color:#a0a2ac;-webkit-text-stroke:0.2px">337</div><div style="position:absolute;left:1345px;top:716px;width:45px;text-align:right;font:13.5px/26px 'Liberation Mono',monospace;color:#a0a2ac;-webkit-text-stroke:0.2px">338</div><div style="position:absolute;left:1345px;top:742px;width:45px;text-align:right;font:13.5px/26px 'Liberation Mono',monospace;color:#a0a2ac;-webkit-text-stroke:0.2px">339</div><div style="position:absolute;left:1345px;top:768px;width:45px;text-align:right;font:13.5px/26px 'Liberation Mono',monospace;color:#a0a2ac;-webkit-text-stroke:0.2px">340</div><div style="position:absolute;left:1345px;top:794px;width:45px;text-align:right;font:13.5px/26px 'Liberation Mono',monospace;color:#a0a2ac;-webkit-text-stroke:0.2px">341</div><svg style="position:absolute;left:1342px;top:538px;overflow:visible" width="18" height="14" viewBox="0 0 18 14" ><path d="M0.2 5.7 H4.2" stroke="#c8d0c8" stroke-width="1.3"/><path d="M6.5 -0.6 C5 2 5 3.5 6.3 5.5 C7.8 7.5 7.8 9 6.7 11.5" fill="none" stroke="#6a9a72" stroke-width="1.1"/><path d="M9 5.7 H16.5 M11.6 0.4 L16.8 5.7 L11.6 11" fill="none" stroke="#d2dad2" stroke-width="1.3" stroke-linecap="round" stroke-linejoin="round"/></svg><svg style="position:absolute;left:1342px;top:668px;overflow:visible" width="18" height="14" viewBox="0 0 18 14" ><path d="M0.2 5.7 H4.2" stroke="#c8d0c8" stroke-width="1.3"/><path d="M6.5 -0.6 C5 2 5 3.5 6.3 5.5 C7.8 7.5 7.8 9 6.7 11.5" fill="none" stroke="#6a9a72" stroke-width="1.1"/><path d="M9 5.7 H16.5 M11.6 0.4 L16.8 5.7 L11.6 11" fill="none" stroke="#d2dad2" stroke-width="1.3" stroke-linecap="round" stroke-linejoin="round"/></svg><div style="position:absolute;left:0;top:0;width:1392px;height:527px;border-radius:10px;box-shadow:0 0 0 1px #0b0b10, 0 3px 8px rgba(0,0,0,0.7), 0 10px 28px rgba(0,0,0,0.5);overflow:hidden;background:#42444f"><div style="position:absolute;left:0;top:0;width:1392px;height:527px;border-radius:10px;box-shadow:inset 0 0 0 1px #5c5e68;z-index:50;pointer-events:none"></div><div style="position:absolute;left:0px;top:0px;width:1392px;height:29px;background:#43454f;"></div><div style="position:absolute;left:8px;top:8px;width:12px;height:12px;border-radius:50%;background:#fe5f57"></div><div style="position:absolute;left:28px;top:8px;width:12px;height:12px;border-radius:50%;background:#5b5d66"></div><div style="position:absolute;left:48px;top:8px;width:12px;height:12px;border-radius:50%;background:#28c840"></div><div style="position:absolute;left:0px;top:4px;font:700 14px/20px 'Liberation Sans',sans-serif;color:#c9cad0;white-space:pre;width:1392px;text-align:center">Git</div><div style="position:absolute;left:0px;top:29px;width:1392px;height:40px;background:#3a3c49;"></div><div style="position:absolute;left:0px;top:69px;width:1392px;height:1px;background:#2c2e37;"></div><div style="position:absolute;left:12px;top:39px;font:700 15px/20px 'Liberation Sans',sans-serif;color:#cfd0d6;white-space:pre;">Git</div><div style="position:absolute;left:48px;top:29px;width:293px;height:40px;background:#2b2c38;"></div><div style="position:absolute;left:48px;top:67px;width:293px;height:3px;background:#b58cf2;"></div><div style="position:absolute;left:60px;top:39px;font:400 15px/20px 'Liberation Sans',sans-serif;color:#d8d9de;white-space:pre;letter-spacing:0.1px">Log: OD-29-list-titles-should-be-editable</div><div style="position:absolute;left:353px;top:39px;font:400 15px/20px 'Liberation Sans',sans-serif;color:#d0d1d6;white-space:pre;letter-spacing:-0.4px">Console</div><svg style="position:absolute;left:417px;top:45px;overflow:visible" width="9" height="9" viewBox="0 0 9 9" ><path d="M1 1 L8 8 M8 1 L1 8" stroke="#73757f" stroke-width="1"/></svg><svg style="position:absolute;left:441px;top:42px;overflow:visible" width="14" height="14" viewBox="0 0 14 14" ><path d="M7 0.5 V13.5 M0.5 7 H13.5" stroke="#cfd1d8" stroke-width="1"/></svg><svg style="position:absolute;left:470px;top:45px;overflow:visible" width="10" height="6" viewBox="0 0 10 6" ><path d="M1 1 L5 5 L9 1" fill="none" stroke="#cfd1d8" stroke-width="1.3"/></svg><svg style="position:absolute;left:1312px;top:41px;overflow:visible" width="14" height="14" viewBox="0 0 14 14" ><rect x="0.6" y="0.6" width="12.8" height="12.8" rx="1.5" fill="none" stroke="#cfd1d8" stroke-width="1.2"/><path d="M9 5 L5 9 M5 6 V9 H8" fill="none" stroke="#cfd1d8" stroke-width="1.1"/></svg><div style="position:absolute;left:1343.8px;top:42.8px;width:2.4px;height:2.4px;border-radius:50%;background:#cfd1d8"></div><div style="position:absolute;left:1343.8px;top:47.3px;width:2.4px;height:2.4px;border-radius:50%;background:#cfd1d8"></div><div style="position:absolute;left:1343.8px;top:51.8px;width:2.4px;height:2.4px;border-radius:50%;background:#cfd1d8"></div><div style="position:absolute;left:1364px;top:48px;width:14px;height:1.5px;background:#b4b6be;"></div><div style="position:absolute;left:38px;top:70px;width:1px;height:457px;background:#2c2e37;"></div><div style="position:absolute;left:243px;top:70px;width:1px;height:457px;background:#2c2e37;"></div><div style="position:absolute;left:926px;top:70px;width:1px;height:457px;background:#2c2e37;"></div><div style="position:absolute;left:39px;top:105px;width:204px;height:1px;background:#2c2e37;"></div><div style="position:absolute;left:244px;top:106px;width:682px;height:1px;background:#2c2e37;"></div><div style="position:absolute;left:927px;top:389px;width:465px;height:1px;background:#2c2e37;"></div><svg style="position:absolute;left:11px;top:79px;overflow:visible" width="16" height="16" viewBox="0 0 16 16" ><path d="M10 4 L6 8 L10 12" fill="none" stroke="#cfd1d8" stroke-width="1.1" stroke-linecap="round" stroke-linejoin="round"/></svg><div style="position:absolute;left:9px;top:104px;width:19px;height:1px;background:#565862;"></div><svg style="position:absolute;left:10px;top:112px;overflow:visible" width="16" height="16" viewBox="0 0 16 16" ><path d="M8 2 V14 M2 8 H14" fill="none" stroke="#cfd1d8" stroke-width="1.1" stroke-linecap="round" stroke-linejoin="round"/></svg><svg style="position:absolute;left:10px;top:139px;overflow:visible" width="16" height="16" viewBox="0 0 16 16" ><path d="M13 3 L3.5 12.5 M3.5 6 V12.5 H10" fill="none" stroke="#cfd1d8" stroke-width="1.1" stroke-linecap="round" stroke-linejoin="round"/></svg><svg style="position:absolute;left:10px;top:165px;overflow:visible" width="16" height="16" viewBox="0 0 16 16" ><path d="M2.5 4 H13.5 M6 4 V2.5 H10 V4 M4 4 L4.8 14 H11.2 L12 4 M6.8 7 V11 M9.2 7 V11" fill="none" stroke="#6c6e78" stroke-width="1.1" stroke-linecap="round" stroke-linejoin="round"/></svg><svg style="position:absolute;left:10px;top:192px;overflow:visible" width="16" height="16" viewBox="0 0 16 16" ><path d="M8 5 H14 M10 2.5 L7.5 5 L10 7.5 M2 11 H8 M5.5 8.5 L8 11 L5.5 13.5 M6 11 L10 5" fill="none" stroke="#6c6e78" stroke-width="1.1" stroke-linecap="round" stroke-linejoin="round"/></svg><svg style="position:absolute;left:10px;top:217px;overflow:visible" width="16" height="16" viewBox="0 0 16 16" ><path d="M7 2.5 A4.5 4.5 0 1 1 6.99 2.5 M10.3 10.3 L14 14" fill="none" stroke="#6c6e78" stroke-width="1.1" stroke-linecap="round" stroke-linejoin="round"/></svg><svg style="position:absolute;left:10px;top:243px;overflow:visible" width="16" height="16" viewBox="0 0 16 16" ><path d="M13.5 2.5 L11.5 4.5 M10 6 L8 8 M6.5 9.5 L4 12 M3.5 6 V8 M3.5 10 V12.5 H6 M8 12.5 H10" fill="none" stroke="#cfd1d8" stroke-width="1.1" stroke-linecap="round" stroke-linejoin="round"/></svg><svg style="position:absolute;left:11px;top:270px;overflow:visible" width="14" height="14" viewBox="0 0 14 14" ><path d="M7 0.5 L8.9 4.8 L13.5 5.2 L10 8.3 L11.1 12.8 L7 10.4 L2.9 12.8 L4 8.3 L0.5 5.2 L5.1 4.8 Z" fill="#f0c040"/></svg><svg style="position:absolute;left:10px;top:295px;overflow:visible" width="16" height="16" viewBox="0 0 16 16" ><path d="M8 1.5 A6.5 6.5 0 1 1 7.99 1.5 M8 1.5 V4.5 M8 11.5 V14.5 M1.5 8 H4.5 M11.5 8 H14.5" fill="none" stroke="#cfd1d8" stroke-width="1.1" stroke-linecap="round" stroke-linejoin="round"/></svg><div style="position:absolute;left:9px;top:320px;width:19px;height:1px;background:#565862;"></div><svg style="position:absolute;left:10px;top:329px;overflow:visible" width="16" height="16" viewBox="0 0 16 16" ><path d="M8 5.5 A2.5 2.5 0 1 1 7.99 5.5 M8 1.5 L9.3 3.2 L11.5 2.8 L11.9 5 L14 6 L13 8 L14 10 L11.9 11 L11.5 13.2 L9.3 12.8 L8 14.5 L6.7 12.8 L4.5 13.2 L4.1 11 L2 10 L3 8 L2 6 L4.1 5 L4.5 2.8 L6.7 3.2 Z" fill="none" stroke="#cfd1d8" stroke-width="1.1" stroke-linecap="round" stroke-linejoin="round"/></svg><div style="position:absolute;left:9px;top:353px;width:19px;height:1px;background:#565862;"></div><svg style="position:absolute;left:23px;top:342px;overflow:visible" width="5" height="5" viewBox="0 0 5 5" ><path d="M5 0 V5 H0 Z" fill="#cfd1d8"/></svg><div style="position:absolute;left:8px;top:359px;width:21px;height:21px;background:#2b2c36;border-radius:4px"></div><svg style="position:absolute;left:10px;top:361px;overflow:visible" width="16" height="16" viewBox="0 0 16 16" ><path d="M3.5 2.5 H1.5 V13.5 H3.5 M12.5 2.5 H14.5 V13.5 H12.5 M4.5 4.5 H7.2 L8.3 5.8 H11.5 V11.5 H4.5 Z" fill="none" stroke="#cfd1d8" stroke-width="1.1" stroke-linecap="round" stroke-linejoin="round"/></svg><svg style="position:absolute;left:10px;top:387px;overflow:visible" width="16" height="16" viewBox="0 0 16 16" ><path d="M5 6 L8 3 L11 6 M5 10 L8 13 L11 10" fill="none" stroke="#cfd1d8" stroke-width="1.1" stroke-linecap="round" stroke-linejoin="round"/></svg><svg style="position:absolute;left:10px;top:413px;overflow:visible" width="16" height="16" viewBox="0 0 16 16" ><path d="M5 3 L8 6 L11 3 M5 13 L8 10 L11 13" fill="none" stroke="#cfd1d8" stroke-width="1.1" stroke-linecap="round" stroke-linejoin="round"/></svg><div style="position:absolute;left:39px;top:70px;width:204px;height:457px;overflow:hidden"><svg style="position:absolute;left:12px;top:9px;overflow:visible" width="16" height="16" viewBox="0 0 16 16" ><path d="M7 2.5 A4.5 4.5 0 1 1 6.99 2.5 M10.3 10.3 L14 14" fill="none" stroke="#cfd1d8" stroke-width="1.1" stroke-linecap="round" stroke-linejoin="round"/></svg><div style="position:absolute;left:12px;top:76px;width:200px;height:20px;background:#4c5e94;border-radius:4px"></div><div style="position:absolute;left:25px;top:36px;font:400 15px/20px 'Liberation Sans',sans-serif;color:#cbcdd3;white-space:pre;">HEAD (Current Branch)</div><svg style="position:absolute;left:6px;top:62px;overflow:visible" width="10" height="6" viewBox="0 0 10 6" ><path d="M1 1 L5 5 L9 1" fill="none" stroke="#cfd1d8" stroke-width="1.3"/></svg><div style="position:absolute;left:25px;top:56px;font:400 15px/20px 'Liberation Sans',sans-serif;color:#cbcdd3;white-space:pre;">Local</div><svg style="position:absolute;left:43px;top:78px;overflow:visible" width="14" height="14" viewBox="0 0 14 14" ><path d="M2 7 L7.5 1.5 H12.5 V6.5 L7 12 Z" fill="none" stroke="#f0b060" stroke-width="1.3" stroke-linejoin="round"/><circle cx="10" cy="4" r="1" fill="#f0b060"/></svg><div style="position:absolute;left:61px;top:76px;font:400 15px/20px 'Liberation Sans',sans-serif;color:#ffffff;white-space:pre;">OD<span style="padding:0 0.9px">-</span>29<span style="padding:0 0.9px">-</span>list<span style="padding:0 0.9px">-</span>titles<span style="padding:0 0.9px">-</span>should<span style="padding:0 0.9px">-</span>be<span style="padding:0 0.9px">-</span>editable</div><svg style="position:absolute;left:43px;top:98px;overflow:visible" width="14" height="14" viewBox="0 0 14 14" ><path d="M7 0.5 L8.9 4.8 L13.5 5.2 L10 8.3 L11.1 12.8 L7 10.4 L2.9 12.8 L4 8.3 L0.5 5.2 L5.1 4.8 Z" fill="#f0c040"/></svg><div style="position:absolute;left:61px;top:96px;font:400 15px/20px 'Liberation Sans',sans-serif;color:#cbcdd3;white-space:pre;">master</div><svg style="position:absolute;left:41px;top:117px;overflow:visible" width="14" height="15" viewBox="0 0 14 15" ><circle cx="4" cy="3" r="1.8" fill="none" stroke="#cfd1d8" stroke-width="1.2"/><circle cx="11" cy="5" r="1.8" fill="none" stroke="#cfd1d8" stroke-width="1.2"/><path d="M4 5 V14 M4 11 C4 8 11 9 11 7" fill="none" stroke="#cfd1d8" stroke-width="1.2"/></svg><div style="position:absolute;left:61px;top:116px;font:400 15px/20px 'Liberation Sans',sans-serif;color:#cbcdd3;white-space:pre;">temp<span style="padding:0 0.9px">-</span>1</div><svg style="position:absolute;left:6px;top:142px;overflow:visible" width="10" height="6" viewBox="0 0 10 6" ><path d="M1 1 L5 5 L9 1" fill="none" stroke="#cfd1d8" stroke-width="1.3"/></svg><div style="position:absolute;left:25px;top:136px;font:400 15px/20px 'Liberation Sans',sans-serif;color:#cbcdd3;white-space:pre;">Remote</div><svg style="position:absolute;left:25px;top:162px;overflow:visible" width="10" height="6" viewBox="0 0 10 6" ><path d="M1 1 L5 5 L9 1" fill="none" stroke="#cfd1d8" stroke-width="1.3"/></svg><svg style="position:absolute;left:43px;top:158px;overflow:visible" width="16" height="14" viewBox="0 0 16 14" ><path d="M1.5 2.5 h4.5 l1.5 1.5 h6 v8.5 h-12 z" fill="none" stroke="#cfd1d8" stroke-width="1.2"/></svg><div style="position:absolute;left:61px;top:156px;font:400 15px/20px 'Liberation Sans',sans-serif;color:#cbcdd3;white-space:pre;">origin</div><svg style="position:absolute;left:62px;top:178px;overflow:visible" width="14" height="14" viewBox="0 0 14 14" ><path d="M7 0.5 L8.9 4.8 L13.5 5.2 L10 8.3 L11.1 12.8 L7 10.4 L2.9 12.8 L4 8.3 L0.5 5.2 L5.1 4.8 Z" fill="#f0c040"/></svg><div style="position:absolute;left:79px;top:176px;font:400 15px/20px 'Liberation Sans',sans-serif;color:#cbcdd3;white-space:pre;">master</div><svg style="position:absolute;left:42px;top:202px;overflow:visible" width="10" height="6" viewBox="0 0 10 6" ><path d="M1 1 L5 5 L9 1" fill="none" stroke="#cfd1d8" stroke-width="1.3"/></svg><svg style="position:absolute;left:61px;top:198px;overflow:visible" width="16" height="14" viewBox="0 0 16 14" ><path d="M1.5 2.5 h4.5 l1.5 1.5 h6 v8.5 h-12 z" fill="none" stroke="#cfd1d8" stroke-width="1.2"/></svg><div style="position:absolute;left:79px;top:196px;font:400 15px/20px 'Liberation Sans',sans-serif;color:#cbcdd3;white-space:pre;">feature</div><svg style="position:absolute;left:78px;top:217px;overflow:visible" width="14" height="15" viewBox="0 0 14 15" ><circle cx="4" cy="3" r="1.8" fill="none" stroke="#cfd1d8" stroke-width="1.2"/><circle cx="11" cy="5" r="1.8" fill="none" stroke="#cfd1d8" stroke-width="1.2"/><path d="M4 5 V14 M4 11 C4 8 11 9 11 7" fill="none" stroke="#cfd1d8" stroke-width="1.2"/></svg><div style="position:absolute;left:97px;top:216px;font:400 15px/20px 'Liberation Sans',sans-serif;color:#cbcdd3;white-space:pre;">system<span style="padding:0 0.9px">-</span>lists</div><svg style="position:absolute;left:42px;top:242px;overflow:visible" width="10" height="6" viewBox="0 0 10 6" ><path d="M1 1 L5 5 L9 1" fill="none" stroke="#cfd1d8" stroke-width="1.3"/></svg><svg style="position:absolute;left:61px;top:238px;overflow:visible" width="16" height="14" viewBox="0 0 16 14" ><path d="M1.5 2.5 h4.5 l1.5 1.5 h6 v8.5 h-12 z" fill="none" stroke="#cfd1d8" stroke-width="1.2"/></svg><div style="position:absolute;left:79px;top:236px;font:400 15px/20px 'Liberation Sans',sans-serif;color:#cbcdd3;white-space:pre;">OT<span style="padding:0 0.9px">-</span>4</div><svg style="position:absolute;left:78px;top:257px;overflow:visible" width="14" height="15" viewBox="0 0 14 15" ><circle cx="4" cy="3" r="1.8" fill="none" stroke="#cfd1d8" stroke-width="1.2"/><circle cx="11" cy="5" r="1.8" fill="none" stroke="#cfd1d8" stroke-width="1.2"/><path d="M4 5 V14 M4 11 C4 8 11 9 11 7" fill="none" stroke="#cfd1d8" stroke-width="1.2"/></svg><div style="position:absolute;left:97px;top:256px;font:400 15px/20px 'Liberation Sans',sans-serif;color:#cbcdd3;white-space:pre;">when<span style="padding:0 0.9px">-</span>sync<span style="padding:0 0.9px">-</span>changes</div><svg style="position:absolute;left:60px;top:277px;overflow:visible" width="14" height="15" viewBox="0 0 14 15" ><circle cx="4" cy="3" r="1.8" fill="none" stroke="#cfd1d8" stroke-width="1.2"/><circle cx="11" cy="5" r="1.8" fill="none" stroke="#cfd1d8" stroke-width="1.2"/><path d="M4 5 V14 M4 11 C4 8 11 9 11 7" fill="none" stroke="#cfd1d8" stroke-width="1.2"/></svg><div style="position:absolute;left:79px;top:276px;font:400 15px/20px 'Liberation Sans',sans-serif;color:#cbcdd3;white-space:pre;">add<span style="padding:0 0.9px">-</span>daily<span style="padding:0 0.9px">-</span>job</div><svg style="position:absolute;left:60px;top:297px;overflow:visible" width="14" height="15" viewBox="0 0 14 15" ><circle cx="4" cy="3" r="1.8" fill="none" stroke="#cfd1d8" stroke-width="1.2"/><circle cx="11" cy="5" r="1.8" fill="none" stroke="#cfd1d8" stroke-width="1.2"/><path d="M4 5 V14 M4 11 C4 8 11 9 11 7" fill="none" stroke="#cfd1d8" stroke-width="1.2"/></svg><div style="position:absolute;left:79px;top:296px;font:400 15px/20px 'Liberation Sans',sans-serif;color:#cbcdd3;white-space:pre;">OD<span style="padding:0 0.9px">-</span>29<span style="padding:0 0.9px">-</span>list<span style="padding:0 0.9px">-</span>titles<span style="padding:0 0.9px">-</span>should<span style="padding:0 0.9px">-</span>be<span style="padding:0 0.9px">-</span>editable</div><svg style="position:absolute;left:60px;top:317px;overflow:visible" width="14" height="15" viewBox="0 0 14 15" ><circle cx="4" cy="3" r="1.8" fill="none" stroke="#cfd1d8" stroke-width="1.2"/><circle cx="11" cy="5" r="1.8" fill="none" stroke="#cfd1d8" stroke-width="1.2"/><path d="M4 5 V14 M4 11 C4 8 11 9 11 7" fill="none" stroke="#cfd1d8" stroke-width="1.2"/></svg><div style="position:absolute;left:79px;top:316px;font:400 15px/20px 'Liberation Sans',sans-serif;color:#cbcdd3;white-space:pre;">OT<span style="padding:0 0.9px">-</span>13<span style="padding:0 0.9px">-</span>store<span style="padding:0 0.9px">-</span>game<span style="padding:0 0.9px">-</span>releases</div><svg style="position:absolute;left:60px;top:337px;overflow:visible" width="14" height="15" viewBox="0 0 14 15" ><circle cx="4" cy="3" r="1.8" fill="none" stroke="#cfd1d8" stroke-width="1.2"/><circle cx="11" cy="5" r="1.8" fill="none" stroke="#cfd1d8" stroke-width="1.2"/><path d="M4 5 V14 M4 11 C4 8 11 9 11 7" fill="none" stroke="#cfd1d8" stroke-width="1.2"/></svg><div style="position:absolute;left:79px;top:336px;font:400 15px/20px 'Liberation Sans',sans-serif;color:#cbcdd3;white-space:pre;">vndb<span style="padding:0 0.9px">-</span>api<span style="padding:0 0.9px">-</span>dsl</div><div style="position:absolute;left:3px;top:446px;width:67px;height:7px;background:#5a5c66;border-radius:4px"></div></div><div style="position:absolute;left:247px;top:73px;width:168px;height:30px;background:#3a3c49;border:1px solid #666b98;border-radius:5px;box-sizing:border-box"></div><svg style="position:absolute;left:253px;top:80px;overflow:visible" width="16" height="16" viewBox="0 0 16 16" ><circle cx="7" cy="7" r="4.8" fill="none" stroke="#cfd1d8" stroke-width="1.2"/><path d="M10.4 10.4 L13.3 13.3" stroke="#cfd1d8" stroke-width="1.2" stroke-linecap="round"/></svg><svg style="position:absolute;left:267px;top:86px;overflow:visible" width="6" height="4" viewBox="0 0 6 4" ><path d="M0 0.5 H5 L2.5 3.2 Z" fill="#cfd1d8"/></svg><div style="position:absolute;left:279px;top:78px;width:78px;height:20px;overflow:hidden"><div style="position:absolute;left:0px;top:0px;font:400 15px/20px 'Liberation Sans',sans-serif;color:#7c7e89;white-space:pre;">Text or hash</div></div><div style="position:absolute;left:369px;top:78px;font:400 15px/20px 'Liberation Sans',sans-serif;color:#d0d2d8;white-space:pre;">.*</div><div style="position:absolute;left:392px;top:78px;font:400 15px/20px 'Liberation Sans',sans-serif;color:#d0d2d8;white-space:pre;">Cc</div><div style="position:absolute;left:429px;top:78px;font:400 15px/20px 'Liberation Sans',sans-serif;color:#8a8c96;white-space:pre;">Branch: </div><div style="position:absolute;left:483px;top:78px;font:400 15px/20px 'Liberation Sans',sans-serif;color:#d6d8de;white-space:pre;letter-spacing:0.27px">OD-29-list-titles-s...</div><svg style="position:absolute;left:624px;top:84px;overflow:visible" width="8" height="8" viewBox="0 0 8 8" ><path d="M0.5 0.5 L7.5 7.5 M7.5 0.5 L0.5 7.5" stroke="#7a7c86" stroke-width="1.1"/></svg><div style="position:absolute;left:645px;top:78px;font:400 15px/20px 'Liberation Sans',sans-serif;color:#8a8c96;white-space:pre;">User</div><svg style="position:absolute;left:683px;top:85px;overflow:visible" width="10" height="6" viewBox="0 0 10 6" ><path d="M1 1 L5 5 L9 1" fill="none" stroke="#8a8c96" stroke-width="1.3"/></svg><div style="position:absolute;left:703px;top:78px;font:400 15px/20px 'Liberation Sans',sans-serif;color:#8a8c96;white-space:pre;">Date</div><svg style="position:absolute;left:741px;top:85px;overflow:visible" width="10" height="6" viewBox="0 0 10 6" ><path d="M1 1 L5 5 L9 1" fill="none" stroke="#8a8c96" stroke-width="1.3"/></svg><svg style="position:absolute;left:763px;top:83px;overflow:visible" width="6" height="10" viewBox="0 0 6 10" ><path d="M1 1 L5 5 L1 9" fill="none" stroke="#cfd1d8" stroke-width="1.3"/></svg><div style="position:absolute;left:794px;top:80px;width:16px;height:16px;border-radius:50%;background:#4e505b"></div><svg style="position:absolute;left:794px;top:80px;overflow:visible" width="16" height="16" viewBox="0 0 16 16" ><path d="M6 4.5 L11 8 L6 11.5 Z" fill="none" stroke="#7c7e88" stroke-width="1.1" stroke-linecap="round" stroke-linejoin="round"/></svg><svg style="position:absolute;left:820px;top:80px;overflow:visible" width="16" height="16" viewBox="0 0 16 16" ><path d="M3.5 9 A5 5 0 0 1 12 4.5 M12.5 7 A5 5 0 0 1 4 11.5 M1.5 7 L3.5 9.5 L5.5 7.5 M14.5 9 L12.5 6.5 L10.5 8.5" fill="none" stroke="#cfd1d8" stroke-width="1.1" stroke-linecap="round" stroke-linejoin="round"/></svg><svg style="position:absolute;left:846px;top:80px;overflow:visible" width="16" height="16" viewBox="0 0 16 16" ><path d="M4.5 10 A2.3 2.3 0 1 1 4.49 10 M11.5 10 A2.3 2.3 0 1 1 11.49 10 M4.3 10 C4.3 6 7 2.5 10.5 1.3 M10.5 1.3 C9.8 4 10.8 7 11.3 10 M9 1.3 H11.5" fill="none" stroke="#cfd1d8" stroke-width="1.1" stroke-linecap="round" stroke-linejoin="round"/></svg><svg style="position:absolute;left:872px;top:80px;overflow:visible" width="16" height="16" viewBox="0 0 16 16" ><path d="M0.8 8 C3 2.6 13 2.6 15.2 8 C13 13.4 3 13.4 0.8 8 Z M8 5.3 A2.7 2.7 0 1 1 7.99 5.3" fill="none" stroke="#cfd1d8" stroke-width="1.1" stroke-linecap="round" stroke-linejoin="round"/></svg><svg style="position:absolute;left:885px;top:91px;overflow:visible" width="5" height="5" viewBox="0 0 5 5" ><path d="M5 0 V5 H0 Z" fill="#cfd1d8"/></svg><svg style="position:absolute;left:898px;top:80px;overflow:visible" width="16" height="16" viewBox="0 0 16 16" ><path d="M7 2.5 A4.5 4.5 0 1 1 6.99 2.5 M10.3 10.3 L13.5 13.5" fill="none" stroke="#cfd1d8" stroke-width="1.1" stroke-linecap="round" stroke-linejoin="round"/></svg><div style="position:absolute;left:248px;top:211px;width:660px;height:26px;background:#4c5e94;border-radius:5px"></div><svg style="position:absolute;left:244px;top:107px;overflow:visible" width="60" height="421" viewBox="0 0 60 421" ><line x1="19" y1="0" x2="19" y2="8" stroke="#5b9db0" stroke-width="1.1"/><line x1="19" y1="12" x2="19" y2="421" stroke="#bba577" stroke-width="1.1"/><polyline points="30,0 42,13 42,34" fill="none" stroke="#5b9db0" stroke-width="1.1"/><line x1="42" y1="38" x2="42" y2="421" stroke="#cc8a72" stroke-width="1.1"/><line x1="42" y1="38" x2="19" y2="64" stroke="#cc8a72" stroke-width="1.1"/></svg><div style="position:absolute;left:258.4px;top:114.9px;width:9.2px;height:9.2px;border-radius:50%;background:#c6a862"></div><div style="position:absolute;left:299px;top:109.5px;width:155px;height:20px;overflow:hidden"><div style="position:absolute;left:0px;top:0px;font:400 15px/20px 'Liberation Sans',sans-serif;color:#cbcdd3;white-space:pre;">Fixed failing test</div></div><div style="position:absolute;left:577px;top:109.5px;width:132px;height:20px;overflow:hidden"><div style="position:absolute;left:0px;top:0px;font:400 15px/20px 'Liberation Sans',sans-serif;color:#cbcdd3;white-space:pre;">Nhi Nguyen</div></div><div style="position:absolute;left:715px;top:109.5px;font:400 15px/20px 'Liberation Sans',sans-serif;color:#cbcdd3;white-space:pre;letter-spacing:0.23px">Yesterday 8:03 pm</div><div style="position:absolute;left:876px;top:112.5px;width:14px;height:14px;border-radius:50%;background:#4a9e5c"></div><svg style="position:absolute;left:876px;top:112.5px;overflow:visible" width="14" height="14" viewBox="0 0 14 14" ><path d="M3.8 7.2 L6.2 9.6 L10.4 4.8" fill="none" stroke="#ffffff" stroke-width="1.8" stroke-linecap="round" stroke-linejoin="round"/></svg><div style="position:absolute;left:281.9px;top:140.9px;width:9.2px;height:9.2px;border-radius:50%;background:#c9805f"></div><div style="position:absolute;left:299px;top:135.5px;width:120px;height:20px;overflow:hidden"><div style="position:absolute;left:0px;top:0px;font:400 15px/20px 'Liberation Sans',sans-serif;color:#686a73;white-space:pre;">Merge branch 'master' into OD-29-list-titles-should-be-editable</div></div><div style="position:absolute;left:577px;top:135.5px;width:132px;height:20px;overflow:hidden"><div style="position:absolute;left:0px;top:0px;font:700 15px/20px 'Liberation Sans',sans-serif;color:#5f6168;white-space:pre;letter-spacing:-0.45px">Du Van Nguyen</div></div><div style="position:absolute;left:715px;top:135.5px;font:400 15px/20px 'Liberation Sans',sans-serif;color:#686a73;white-space:pre;letter-spacing:0.23px">Yesterday 7:56 pm</div><div style="position:absolute;left:876px;top:138.5px;width:14px;height:14px;border-radius:50%;background:#e05555"></div><div style="position:absolute;left:882px;top:141.0px;width:2px;height:5.5px;background:#ffffff;border-radius:1px"></div><div style="position:absolute;left:882px;top:148.0px;width:2px;height:2px;background:#ffffff;border-radius:1px"></div><div style="position:absolute;left:258.4px;top:166.9px;width:9.2px;height:9.2px;border-radius:50%;background:#c6a862"></div><div style="position:absolute;left:299px;top:161.5px;width:275px;height:20px;overflow:hidden"><div style="position:absolute;left:0px;top:0px;font:400 15px/20px 'Liberation Sans',sans-serif;color:#cbcdd3;white-space:pre;">Reduce display name max length from 25 to 20</div></div><div style="position:absolute;left:577px;top:161.5px;width:132px;height:20px;overflow:hidden"><div style="position:absolute;left:0px;top:0px;font:400 15px/20px 'Liberation Sans',sans-serif;color:#cbcdd3;white-space:pre;">Nhi Nguyen</div></div><div style="position:absolute;left:715px;top:161.5px;font:400 15px/20px 'Liberation Sans',sans-serif;color:#cbcdd3;white-space:pre;letter-spacing:0.23px">Yesterday 7:48 pm</div><div style="position:absolute;left:876px;top:164.5px;width:14px;height:14px;border-radius:50%;background:#e05555"></div><div style="position:absolute;left:882px;top:167.0px;width:2px;height:5.5px;background:#ffffff;border-radius:1px"></div><div style="position:absolute;left:882px;top:174.0px;width:2px;height:2px;background:#ffffff;border-radius:1px"></div><div style="position:absolute;left:258.4px;top:192.9px;width:9.2px;height:9.2px;border-radius:50%;background:#c6a862"></div><div style="position:absolute;left:299px;top:187.5px;width:275px;height:20px;overflow:hidden"><div style="position:absolute;left:0px;top:0px;font:400 15px/20px 'Liberation Sans',sans-serif;color:#cbcdd3;white-space:pre;">Update CLAUDE.md examples to use ErrorResponse</div></div><div style="position:absolute;left:577px;top:187.5px;width:132px;height:20px;overflow:hidden"><div style="position:absolute;left:0px;top:0px;font:400 15px/20px 'Liberation Sans',sans-serif;color:#cbcdd3;white-space:pre;">Nhi Nguyen</div></div><div style="position:absolute;left:715px;top:187.5px;font:400 15px/20px 'Liberation Sans',sans-serif;color:#cbcdd3;white-space:pre;letter-spacing:0.23px">Yesterday 7:48 pm</div><div style="position:absolute;left:281.9px;top:218.9px;width:9.2px;height:9.2px;border-radius:50%;background:#c9805f"></div><div style="position:absolute;left:299px;top:213.5px;width:275px;height:20px;overflow:hidden"><div style="position:absolute;left:0px;top:0px;font:400 15px/20px 'Liberation Sans',sans-serif;color:#ffffff;white-space:pre;">Add integration test for endpoint POST lists/:listId</div></div><div style="position:absolute;left:577px;top:213.5px;width:132px;height:20px;overflow:hidden"><div style="position:absolute;left:0px;top:0px;font:700 15px/20px 'Liberation Sans',sans-serif;color:#ffffff;white-space:pre;letter-spacing:-0.45px">Du Van Nguyen</div></div><div style="position:absolute;left:715px;top:213.5px;font:400 15px/20px 'Liberation Sans',sans-serif;color:#ffffff;white-space:pre;letter-spacing:0.23px">Yesterday 7:42 pm</div><div style="position:absolute;left:258.4px;top:244.9px;width:9.2px;height:9.2px;border-radius:50%;background:#c6a862"></div><div style="position:absolute;left:299px;top:239.5px;width:275px;height:20px;overflow:hidden"><div style="position:absolute;left:0px;top:0px;font:400 15px/20px 'Liberation Sans',sans-serif;color:#cbcdd3;white-space:pre;">Delete Discord auth record when migrating account</div></div><div style="position:absolute;left:577px;top:239.5px;width:132px;height:20px;overflow:hidden"><div style="position:absolute;left:0px;top:0px;font:400 15px/20px 'Liberation Sans',sans-serif;color:#cbcdd3;white-space:pre;">Nhi Nguyen</div></div><div style="position:absolute;left:715px;top:239.5px;font:400 15px/20px 'Liberation Sans',sans-serif;color:#cbcdd3;white-space:pre;letter-spacing:0.23px">Yesterday 7:40 pm</div><div style="position:absolute;left:258.4px;top:270.9px;width:9.2px;height:9.2px;border-radius:50%;background:#c6a862"></div><div style="position:absolute;left:299px;top:265.5px;width:275px;height:20px;overflow:hidden"><div style="position:absolute;left:0px;top:0px;font:400 15px/20px 'Liberation Sans',sans-serif;color:#cbcdd3;white-space:pre;">Support Logto email address login and sign up</div></div><div style="position:absolute;left:577px;top:265.5px;width:132px;height:20px;overflow:hidden"><div style="position:absolute;left:0px;top:0px;font:400 15px/20px 'Liberation Sans',sans-serif;color:#cbcdd3;white-space:pre;">Nhi Nguyen</div></div><div style="position:absolute;left:715px;top:265.5px;font:400 15px/20px 'Liberation Sans',sans-serif;color:#cbcdd3;white-space:pre;letter-spacing:0.23px">Yesterday 7:00 pm</div><div style="position:absolute;left:876px;top:268.5px;width:14px;height:14px;border-radius:50%;background:#4a9e5c"></div><svg style="position:absolute;left:876px;top:268.5px;overflow:visible" width="14" height="14" viewBox="0 0 14 14" ><path d="M3.8 7.2 L6.2 9.6 L10.4 4.8" fill="none" stroke="#ffffff" stroke-width="1.8" stroke-linecap="round" stroke-linejoin="round"/></svg><div style="position:absolute;left:258.4px;top:296.9px;width:9.2px;height:9.2px;border-radius:50%;background:#c6a862"></div><div style="position:absolute;left:299px;top:291.5px;width:275px;height:20px;overflow:hidden"><div style="position:absolute;left:0px;top:0px;font:400 15px/20px 'Liberation Sans',sans-serif;color:#cbcdd3;white-space:pre;">Standardize API error responses with ErrorResponse</div></div><div style="position:absolute;left:577px;top:291.5px;width:132px;height:20px;overflow:hidden"><div style="position:absolute;left:0px;top:0px;font:400 15px/20px 'Liberation Sans',sans-serif;color:#cbcdd3;white-space:pre;">Nhi Nguyen</div></div><div style="position:absolute;left:715px;top:291.5px;font:400 15px/20px 'Liberation Sans',sans-serif;color:#cbcdd3;white-space:pre;letter-spacing:0.23px">Yesterday 6:56 pm</div><div style="position:absolute;left:258.4px;top:322.9px;width:9.2px;height:9.2px;border-radius:50%;background:#c6a862"></div><div style="position:absolute;left:299px;top:317.5px;width:275px;height:20px;overflow:hidden"><div style="position:absolute;left:0px;top:0px;font:400 15px/20px 'Liberation Sans',sans-serif;color:#cbcdd3;white-space:pre;">Add official field to game releases and remove</div></div><div style="position:absolute;left:577px;top:317.5px;width:132px;height:20px;overflow:hidden"><div style="position:absolute;left:0px;top:0px;font:400 15px/20px 'Liberation Sans',sans-serif;color:#cbcdd3;white-space:pre;">Nhi Nguyen</div></div><div style="position:absolute;left:715px;top:317.5px;font:400 15px/20px 'Liberation Sans',sans-serif;color:#cbcdd3;white-space:pre;letter-spacing:0.23px">19/2/2026, 10:41 pm</div><div style="position:absolute;left:876px;top:320.5px;width:14px;height:14px;border-radius:50%;background:#4a9e5c"></div><svg style="position:absolute;left:876px;top:320.5px;overflow:visible" width="14" height="14" viewBox="0 0 14 14" ><path d="M3.8 7.2 L6.2 9.6 L10.4 4.8" fill="none" stroke="#ffffff" stroke-width="1.8" stroke-linecap="round" stroke-linejoin="round"/></svg><div style="position:absolute;left:281.9px;top:348.9px;width:9.2px;height:9.2px;border-radius:50%;background:#c9805f"></div><div style="position:absolute;left:299px;top:343.5px;width:275px;height:20px;overflow:hidden"><div style="position:absolute;left:0px;top:0px;font:400 15px/20px 'Liberation Sans',sans-serif;color:#cbcdd3;white-space:pre;">Change endpoint back to /lists/:listId</div></div><div style="position:absolute;left:577px;top:343.5px;width:132px;height:20px;overflow:hidden"><div style="position:absolute;left:0px;top:0px;font:700 15px/20px 'Liberation Sans',sans-serif;color:#cbcdd3;white-space:pre;letter-spacing:-0.45px">Du Van Nguyen</div></div><div style="position:absolute;left:715px;top:343.5px;font:400 15px/20px 'Liberation Sans',sans-serif;color:#cbcdd3;white-space:pre;letter-spacing:0.23px">18/2/2026, 10:48 pm</div><div style="position:absolute;left:876px;top:346.5px;width:14px;height:14px;border-radius:50%;background:#4a9e5c"></div><svg style="position:absolute;left:876px;top:346.5px;overflow:visible" width="14" height="14" viewBox="0 0 14 14" ><path d="M3.8 7.2 L6.2 9.6 L10.4 4.8" fill="none" stroke="#ffffff" stroke-width="1.8" stroke-linecap="round" stroke-linejoin="round"/></svg><div style="position:absolute;left:281.9px;top:374.9px;width:9.2px;height:9.2px;border-radius:50%;background:#c9805f"></div><div style="position:absolute;left:299px;top:369.5px;width:275px;height:20px;overflow:hidden"><div style="position:absolute;left:0px;top:0px;font:400 15px/20px 'Liberation Sans',sans-serif;color:#cbcdd3;white-space:pre;">- Changed route to list/:listId/name - Move</div></div><div style="position:absolute;left:577px;top:369.5px;width:132px;height:20px;overflow:hidden"><div style="position:absolute;left:0px;top:0px;font:700 15px/20px 'Liberation Sans',sans-serif;color:#cbcdd3;white-space:pre;letter-spacing:-0.45px">Du Van Nguyen</div></div><div style="position:absolute;left:715px;top:369.5px;font:400 15px/20px 'Liberation Sans',sans-serif;color:#cbcdd3;white-space:pre;letter-spacing:0.23px">17/2/2026, 5:01 pm</div><div style="position:absolute;left:281.9px;top:400.9px;width:9.2px;height:9.2px;border-radius:50%;background:#c9805f"></div><div style="position:absolute;left:299px;top:395.5px;width:275px;height:20px;overflow:hidden"><div style="position:absolute;left:0px;top:0px;font:400 15px/20px 'Liberation Sans',sans-serif;color:#cbcdd3;white-space:pre;">Rebased list title branch on master</div></div><div style="position:absolute;left:577px;top:395.5px;width:132px;height:20px;overflow:hidden"><div style="position:absolute;left:0px;top:0px;font:700 15px/20px 'Liberation Sans',sans-serif;color:#cbcdd3;white-space:pre;letter-spacing:-0.45px">Du Van Nguyen</div></div><div style="position:absolute;left:715px;top:395.5px;font:400 15px/20px 'Liberation Sans',sans-serif;color:#cbcdd3;white-space:pre;letter-spacing:0.23px">17/2/2026, 3:29 pm</div><div style="position:absolute;left:281.9px;top:426.9px;width:9.2px;height:9.2px;border-radius:50%;background:#c9805f"></div><div style="position:absolute;left:299px;top:421.5px;width:275px;height:20px;overflow:hidden"><div style="position:absolute;left:0px;top:0px;font:400 15px/20px 'Liberation Sans',sans-serif;color:#cbcdd3;white-space:pre;">Changed to using existing functions to change</div></div><div style="position:absolute;left:577px;top:421.5px;width:132px;height:20px;overflow:hidden"><div style="position:absolute;left:0px;top:0px;font:700 15px/20px 'Liberation Sans',sans-serif;color:#cbcdd3;white-space:pre;letter-spacing:-0.45px">Du Van Nguyen</div></div><div style="position:absolute;left:715px;top:421.5px;font:400 15px/20px 'Liberation Sans',sans-serif;color:#cbcdd3;white-space:pre;letter-spacing:0.23px">16/2/2026, 12:03 pm</div><div style="position:absolute;left:281.9px;top:452.9px;width:9.2px;height:9.2px;border-radius:50%;background:#c9805f"></div><div style="position:absolute;left:299px;top:447.5px;width:275px;height:20px;overflow:hidden"><div style="position:absolute;left:0px;top:0px;font:400 15px/20px 'Liberation Sans',sans-serif;color:#cbcdd3;white-space:pre;">Merged with master</div></div><div style="position:absolute;left:577px;top:447.5px;width:132px;height:20px;overflow:hidden"><div style="position:absolute;left:0px;top:0px;font:700 15px/20px 'Liberation Sans',sans-serif;color:#cbcdd3;white-space:pre;letter-spacing:-0.45px">Du Van Nguyen</div></div><div style="position:absolute;left:715px;top:447.5px;font:400 15px/20px 'Liberation Sans',sans-serif;color:#cbcdd3;white-space:pre;letter-spacing:0.23px">8/2/2026, 11:23 am</div><div style="position:absolute;left:281.9px;top:478.9px;width:9.2px;height:9.2px;border-radius:50%;background:#c9805f"></div><div style="position:absolute;left:299px;top:473.5px;width:275px;height:20px;overflow:hidden"><div style="position:absolute;left:0px;top:0px;font:400 15px/20px 'Liberation Sans',sans-serif;color:#cbcdd3;white-space:pre;">Uncomment merges from master (During rebase)</div></div><div style="position:absolute;left:577px;top:473.5px;width:132px;height:20px;overflow:hidden"><div style="position:absolute;left:0px;top:0px;font:700 15px/20px 'Liberation Sans',sans-serif;color:#cbcdd3;white-space:pre;letter-spacing:-0.45px">Du Van Nguyen</div></div><div style="position:absolute;left:715px;top:473.5px;font:400 15px/20px 'Liberation Sans',sans-serif;color:#cbcdd3;white-space:pre;letter-spacing:0.23px">6/2/2026, 6:38 pm</div><div style="position:absolute;left:281.9px;top:504.9px;width:9.2px;height:9.2px;border-radius:50%;background:#c9805f"></div><div style="position:absolute;left:299px;top:499.5px;width:275px;height:20px;overflow:hidden"><div style="position:absolute;left:0px;top:0px;font:400 15px/20px 'Liberation Sans',sans-serif;color:#cbcdd3;white-space:pre;">Adding route for changing name feature</div></div><div style="position:absolute;left:577px;top:499.5px;width:132px;height:20px;overflow:hidden"><div style="position:absolute;left:0px;top:0px;font:700 15px/20px 'Liberation Sans',sans-serif;color:#cbcdd3;white-space:pre;letter-spacing:-0.45px">Du Van Nguyen</div></div><div style="position:absolute;left:715px;top:499.5px;font:400 15px/20px 'Liberation Sans',sans-serif;color:#cbcdd3;white-space:pre;letter-spacing:0.23px">6/2/2026, 6:21 pm</div><svg style="position:absolute;left:455px;top:112px;overflow:visible" width="14" height="14" viewBox="0 0 14 14" ><path d="M2 7 L7.5 1.5 H12.5 V6.5 L7 12 Z" fill="none" stroke="#9f7de8" stroke-width="1.3" stroke-linejoin="round"/><circle cx="10" cy="4" r="1" fill="#9f7de8"/></svg><svg style="position:absolute;left:460px;top:111px;overflow:visible" width="14" height="14" viewBox="0 0 14 14" ><path d="M2 7 L7.5 1.5 H12.5 V6.5 L7 12 Z" fill="none" stroke="#5fcf80" stroke-width="1.3" stroke-linejoin="round"/><circle cx="10" cy="4" r="1" fill="#5fcf80"/></svg><div style="position:absolute;left:476px;top:110px;font:400 14px/20px 'Liberation Sans',sans-serif;color:#95979f;white-space:pre;letter-spacing:0.05px">origin &amp; master</div><svg style="position:absolute;left:422px;top:138px;overflow:visible" width="14" height="14" viewBox="0 0 14 14" ><path d="M2 7 L7.5 1.5 H12.5 V6.5 L7 12 Z" fill="none" stroke="#9f7de8" stroke-width="1.3" stroke-linejoin="round"/><circle cx="10" cy="4" r="1" fill="#9f7de8"/></svg><div style="position:absolute;left:438px;top:136px;font:400 15px/20px 'Liberation Sans',sans-serif;color:#95979f;white-space:pre;">../OD-29-list-titles-...</div><div style="position:absolute;left:914px;top:112px;width:7px;height:21px;background:#5c5e68;border-radius:4px"></div><svg style="position:absolute;left:939px;top:80px;overflow:visible" width="16" height="16" viewBox="0 0 16 16" ><path d="M7.2 4.5 H15.9 M10.6 1 L7.2 4.5 L10.6 7.9 M0.2 11.5 H8.9 M5.5 8.1 L8.9 11.5 L5.5 14.9" fill="none" stroke="#cfd1d8" stroke-width="1.1" stroke-linecap="round" stroke-linejoin="round"/></svg><svg style="position:absolute;left:965px;top:80px;overflow:visible" width="16" height="16" viewBox="0 0 16 16" ><path d="M5 3 L2 6 L5 9 M2 6 H10 A3.5 3.5 0 0 1 10 13 H6" fill="none" stroke="#cfd1d8" stroke-width="1.1" stroke-linecap="round" stroke-linejoin="round"/></svg><svg style="position:absolute;left:991px;top:80px;overflow:visible" width="16" height="16" viewBox="0 0 16 16" ><path d="M8 1.5 A6.5 6.5 0 1 1 7.99 1.5 M8 4.5 V8 L10.5 10" fill="none" stroke="#cfd1d8" stroke-width="1.1" stroke-linecap="round" stroke-linejoin="round"/></svg><svg style="position:absolute;left:1017px;top:80px;overflow:visible" width="16" height="16" viewBox="0 0 16 16" ><path d="M0.8 8 C3 2.6 13 2.6 15.2 8 C13 13.4 3 13.4 0.8 8 Z M8 5.3 A2.7 2.7 0 1 1 7.99 5.3" fill="none" stroke="#cfd1d8" stroke-width="1.1" stroke-linecap="round" stroke-linejoin="round"/></svg><svg style="position:absolute;left:1030px;top:91px;overflow:visible" width="5" height="5" viewBox="0 0 5 5" ><path d="M5 0 V5 H0 Z" fill="#cfd1d8"/></svg><svg style="position:absolute;left:1338px;top:80px;overflow:visible" width="16" height="16" viewBox="0 0 16 16" ><path d="M4 6 L8 2 L12 6 M4 10 L8 14 L12 10" fill="none" stroke="#cfd1d8" stroke-width="1.1" stroke-linecap="round" stroke-linejoin="round"/></svg><svg style="position:absolute;left:1364px;top:80px;overflow:visible" width="16" height="16" viewBox="0 0 16 16" ><path d="M4 2 L8 6 L12 2 M4 14 L8 10 L12 14" fill="none" stroke="#cfd1d8" stroke-width="1.1" stroke-linecap="round" stroke-linejoin="round"/></svg><svg style="position:absolute;left:934px;top:113px;overflow:visible" width="10" height="6" viewBox="0 0 10 6" ><path d="M1 1 L5 5 L9 1" fill="none" stroke="#cfd1d8" stroke-width="1.3"/></svg><svg style="position:absolute;left:952px;top:109px;overflow:visible" width="16" height="14" viewBox="0 0 16 14" ><path d="M1.5 2.5 h4.5 l1.5 1.5 h6 v8.5 h-12 z" fill="none" stroke="#cfd1d8" stroke-width="1.2"/></svg><div style="position:absolute;left:960px;top:117px;width:7px;height:7px;background:#23345a;border:1.3px solid #4a7ae0;box-sizing:border-box"></div><div style="position:absolute;left:970px;top:107px;font:400 15px/20px 'Liberation Sans',sans-serif;color:#cbcdd3;white-space:pre;letter-spacing:0.27px">otome-tracker.integrationTest</div><div style="position:absolute;left:1177px;top:107px;font:400 15px/20px 'Liberation Sans',sans-serif;color:#7a7c86;white-space:pre;">1 file  src/integrationTest</div><svg style="position:absolute;left:952px;top:133px;overflow:visible" width="10" height="6" viewBox="0 0 10 6" ><path d="M1 1 L5 5 L9 1" fill="none" stroke="#cfd1d8" stroke-width="1.3"/></svg><svg style="position:absolute;left:970px;top:129px;overflow:visible" width="16" height="14" viewBox="0 0 16 14" ><path d="M1.5 2.5 h4.5 l1.5 1.5 h6 v8.5 h-12 z" fill="none" stroke="#cfd1d8" stroke-width="1.2"/></svg><div style="position:absolute;left:988px;top:127px;font:400 15px/20px 'Liberation Sans',sans-serif;color:#cbcdd3;white-space:pre;letter-spacing:0.28px">kotlin/dev/wim</div><div style="position:absolute;left:1093px;top:127px;font:400 15px/20px 'Liberation Sans',sans-serif;color:#7a7c86;white-space:pre;">1 file</div><div style="position:absolute;left:939px;top:147px;width:441px;height:20px;background:#4c5e94;border-radius:4px"></div><svg style="position:absolute;left:988px;top:149px;overflow:visible" width="16" height="16" viewBox="0 0 16 16" ><circle cx="7" cy="7" r="6" fill="#23345a" stroke="#4a7ae0" stroke-width="1.4"/><path d="M9.5 5 A3 3 0 1 0 9.5 9" fill="none" stroke="#6fa0ff" stroke-width="1.4"/><rect x="8" y="8" width="7" height="7" fill="#2b2840" stroke="#a070f0" stroke-width="1"/></svg><div style="position:absolute;left:1006px;top:147px;font:400 15px/20px 'Liberation Sans',sans-serif;color:#8ad8f5;white-space:pre;letter-spacing:0.13px">ListsIntegrationTest.kt</div><div style="position:absolute;left:941px;top:405px;font:700 15px/21px 'Liberation Mono',sans-serif;color:#d4d6dc;white-space:pre;">Add integration test for endpoint POST
lists/:listId</div><div style="position:absolute;left:941px;top:466px;font:15px/18px 'Liberation Sans',sans-serif;color:#cbcdd3;white-space:pre">70ec8c9d Du Van Nguyen <span style="color:#ff79c6">&lt;vandu7124@gmail.com&gt;</span> on
20/2/2026 at 7:42 pm</div><div style="position:absolute;left:941px;top:510px;font:15px/20px 'Liberation Sans',sans-serif;color:#cbcdd3;white-space:pre">In 3 branches: HEAD, OD-29-list-titles-should-be-e... <span style="color:#ff79c6">Show all</span></div><div style="position:absolute;left:1381px;top:393px;width:7px;height:116px;background:#565862;border-radius:4px"></div></div>
</body></html>
